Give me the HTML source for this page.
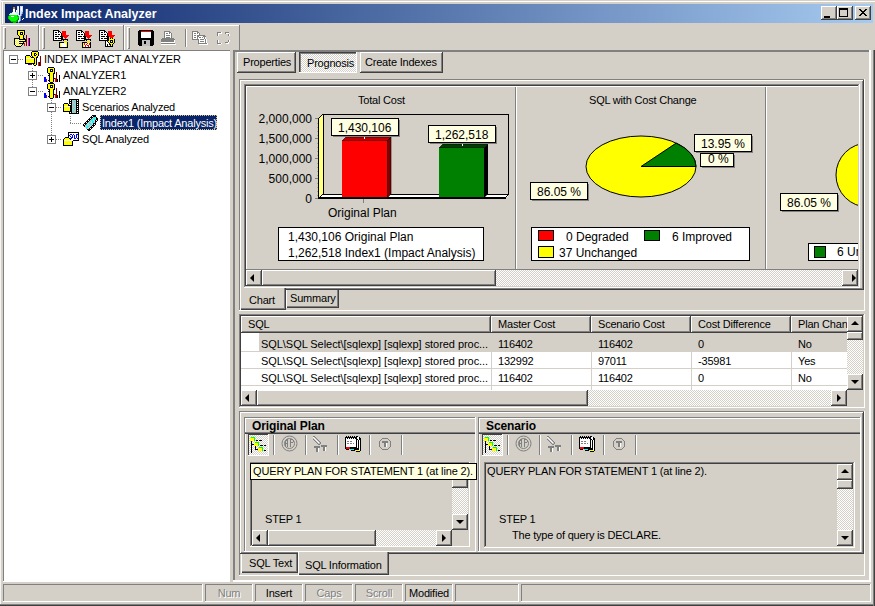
<!DOCTYPE html>
<html><head><meta charset="utf-8">
<style>
*{box-sizing:border-box;margin:0;padding:0}
html,body{width:875px;height:606px;overflow:hidden;background:#d4d0c8;font-family:"Liberation Sans",sans-serif;font-size:11px;color:#000}
.a{position:absolute}
.t{position:absolute;white-space:pre;line-height:13px;letter-spacing:-0.2px}
.up{letter-spacing:0}
.raised{background:#d4d0c8;box-shadow:inset -1px -1px #404040,inset 1px 1px #fff,inset -2px -2px #808080}
.raised2{background:#d4d0c8;box-shadow:inset -1px -1px #404040,inset 1px 1px #fff,inset -2px -2px #808080}
.sunk{box-shadow:inset -1px -1px #fff,inset 1px 1px #808080,inset -2px -2px #d4d0c8,inset 2px 2px #404040}
.dith{background:repeating-conic-gradient(#d4d0c8 0 25%,#fff 0 50%) 0 0/2px 2px}
.hl{background:#fff}
.dk{background:#808080}
.dd{background:#404040}
.arr{position:absolute;width:0;height:0;border:4px solid transparent}
</style></head><body>

<!-- window frame -->
<div class="a hl" style="left:1px;top:1px;width:874px;height:1px"></div>
<div class="a hl" style="left:2px;top:1px;width:1px;height:23px"></div>
<div class="a" style="left:0;top:0;width:1px;height:604px;background:#f4f4f4"></div>
<div class="a dk" style="left:0;top:604px;width:875px;height:1px"></div>
<div class="a dd" style="left:0;top:605px;width:875px;height:1px"></div>
<div class="a dk" style="left:873px;top:50px;width:1px;height:556px"></div>
<div class="a dd" style="left:874px;top:50px;width:1px;height:556px"></div>

<!-- title bar -->
<div class="a" style="left:5px;top:4px;width:868px;height:19px;background:linear-gradient(to right,#0a246a,#a6caf0)"></div>
<svg class="a" style="left:8px;top:6px" width="17" height="17" shape-rendering="crispEdges"><rect x="9" y="0" width="2" height="1" fill="#d0e0ff"/><rect x="12" y="0" width="3" height="1" fill="#d0e0ff"/><rect x="5" y="1" width="2" height="1" fill="#e08020"/><rect x="9" y="1" width="1" height="1" fill="#d0e0ff"/><rect x="10" y="1" width="1" height="1" fill="#fff"/><rect x="12" y="1" width="1" height="1" fill="#d0e0ff"/><rect x="13" y="1" width="1" height="1" fill="#fff"/><rect x="14" y="1" width="1" height="1" fill="#d0e0ff"/><rect x="5" y="2" width="2" height="1" fill="#e08020"/><rect x="9" y="2" width="1" height="1" fill="#d0e0ff"/><rect x="10" y="2" width="1" height="1" fill="#fff"/><rect x="12" y="2" width="1" height="1" fill="#d0e0ff"/><rect x="13" y="2" width="1" height="1" fill="#fff"/><rect x="14" y="2" width="1" height="1" fill="#d0e0ff"/><rect x="5" y="3" width="2" height="1" fill="#fff"/><rect x="9" y="3" width="1" height="1" fill="#d0e0ff"/><rect x="10" y="3" width="1" height="1" fill="#fff"/><rect x="12" y="3" width="1" height="1" fill="#d0e0ff"/><rect x="13" y="3" width="1" height="1" fill="#fff"/><rect x="14" y="3" width="1" height="1" fill="#d0e0ff"/><rect x="5" y="4" width="2" height="1" fill="#fff"/><rect x="8" y="4" width="1" height="1" fill="#fff"/><rect x="9" y="4" width="1" height="1" fill="#d0e0ff"/><rect x="10" y="4" width="1" height="1" fill="#fff"/><rect x="12" y="4" width="1" height="1" fill="#d0e0ff"/><rect x="13" y="4" width="1" height="1" fill="#fff"/><rect x="14" y="4" width="1" height="1" fill="#d0e0ff"/><rect x="5" y="5" width="2" height="1" fill="#fff"/><rect x="8" y="5" width="1" height="1" fill="#fff"/><rect x="9" y="5" width="1" height="1" fill="#d0e0ff"/><rect x="10" y="5" width="1" height="1" fill="#fff"/><rect x="12" y="5" width="3" height="1" fill="#d0e0ff"/><rect x="4" y="6" width="1" height="1" fill="#d0e0ff"/><rect x="5" y="6" width="2" height="1" fill="#fff"/><rect x="7" y="6" width="3" height="1" fill="#d0e0ff"/><rect x="10" y="6" width="1" height="1" fill="#fff"/><rect x="12" y="6" width="2" height="1" fill="#d0e0ff"/><rect x="14" y="6" width="1" height="1" fill="#8090d0"/><rect x="2" y="7" width="2" height="1" fill="#d0e0ff"/><rect x="4" y="7" width="4" height="1" fill="#fff"/><rect x="8" y="7" width="3" height="1" fill="#d0e0ff"/><rect x="12" y="7" width="2" height="1" fill="#d0e0ff"/><rect x="14" y="7" width="1" height="1" fill="#8090d0"/><rect x="1" y="8" width="2" height="1" fill="#d0e0ff"/><rect x="3" y="8" width="6" height="1" fill="#fff"/><rect x="9" y="8" width="2" height="1" fill="#d0e0ff"/><rect x="12" y="8" width="1" height="1" fill="#d0e0ff"/><rect x="13" y="8" width="1" height="1" fill="#8090d0"/><rect x="1" y="9" width="1" height="1" fill="#00c000"/><rect x="2" y="9" width="7" height="1" fill="#0f0"/><rect x="9" y="9" width="1" height="1" fill="#00c000"/><rect x="10" y="9" width="3" height="1" fill="#d0e0ff"/><rect x="13" y="9" width="1" height="1" fill="#8090d0"/><rect x="0" y="10" width="1" height="1" fill="#00c000"/><rect x="1" y="10" width="2" height="1" fill="#0f0"/><rect x="3" y="10" width="3" height="1" fill="#fff"/><rect x="6" y="10" width="3" height="1" fill="#0f0"/><rect x="9" y="10" width="2" height="1" fill="#00c000"/><rect x="11" y="10" width="1" height="1" fill="#d0e0ff"/><rect x="12" y="10" width="1" height="1" fill="#8090d0"/><rect x="0" y="11" width="1" height="1" fill="#00c000"/><rect x="1" y="11" width="9" height="1" fill="#0f0"/><rect x="10" y="11" width="1" height="1" fill="#00c000"/><rect x="11" y="11" width="1" height="1" fill="#d0e0ff"/><rect x="12" y="11" width="1" height="1" fill="#8090d0"/><rect x="0" y="12" width="1" height="1" fill="#00c000"/><rect x="1" y="12" width="9" height="1" fill="#0f0"/><rect x="10" y="12" width="1" height="1" fill="#008000"/><rect x="11" y="12" width="1" height="1" fill="#d0e0ff"/><rect x="12" y="12" width="1" height="1" fill="#8090d0"/><rect x="15" y="12" width="1" height="1" fill="#fff"/><rect x="1" y="13" width="1" height="1" fill="#00c000"/><rect x="2" y="13" width="7" height="1" fill="#0f0"/><rect x="9" y="13" width="1" height="1" fill="#00c000"/><rect x="10" y="13" width="1" height="1" fill="#008000"/><rect x="11" y="13" width="1" height="1" fill="#d0e0ff"/><rect x="12" y="13" width="1" height="1" fill="#8090d0"/><rect x="14" y="13" width="1" height="1" fill="#fff"/><rect x="2" y="14" width="1" height="1" fill="#00c000"/><rect x="3" y="14" width="5" height="1" fill="#0f0"/><rect x="8" y="14" width="1" height="1" fill="#00c000"/><rect x="9" y="14" width="1" height="1" fill="#008000"/><rect x="10" y="14" width="2" height="1" fill="#d0e0ff"/><rect x="12" y="14" width="1" height="1" fill="#8090d0"/><rect x="3" y="15" width="6" height="1" fill="#00c000"/><rect x="9" y="15" width="1" height="1" fill="#008000"/><rect x="10" y="15" width="1" height="1" fill="#d0e0ff"/><rect x="11" y="15" width="1" height="1" fill="#8090d0"/><rect x="5" y="16" width="3" height="1" fill="#00c000"/><rect x="10" y="16" width="1" height="1" fill="#8090d0"/></svg>
<div class="t" style="left:25px;top:7px;color:#fff;font-weight:bold;font-size:12.5px;line-height:15px;letter-spacing:0">Index Impact Analyzer</div>
<div class="a raised" style="left:821px;top:6px;width:16px;height:14px"></div>
<div class="a" style="left:824px;top:16px;width:6px;height:2px;background:#000"></div>
<div class="a raised" style="left:837px;top:6px;width:16px;height:14px"></div>
<div class="a" style="left:839px;top:8px;width:9px;height:9px;border:1px solid #000;border-top-width:2px"></div>
<div class="a raised" style="left:855px;top:6px;width:16px;height:14px"></div>
<svg class="a" style="left:855px;top:6px" width="16" height="14" shape-rendering="crispEdges">
<path d="M4 3h2v1h-2zM10 3h2v1h-2zM5 4h2v1h-2zM9 4h2v1h-2zM6 5h4v1h-4zM7 6h2v1h-2zM6 7h4v1h-4zM5 8h2v1h-2zM9 8h2v1h-2zM4 9h2v1h-2zM10 9h2v1h-2z" fill="#000"/>
</svg>
<!-- toolbar -->
<div class="a hl" style="left:1px;top:25px;width:239px;height:1px"></div>
<div class="a" style="left:3px;top:27px;width:3px;height:22px;box-shadow:inset 1px 1px #fff,inset -1px -1px #808080"></div>
<div class="a" style="left:42px;top:27px;width:3px;height:22px;box-shadow:inset 1px 1px #fff,inset -1px -1px #808080"></div>
<div class="a" style="left:127px;top:27px;width:3px;height:22px;box-shadow:inset 1px 1px #fff,inset -1px -1px #808080"></div>
<div class="a dk" style="left:38px;top:25px;width:1px;height:25px"></div><div class="a hl" style="left:39px;top:25px;width:1px;height:25px"></div>
<div class="a dk" style="left:123px;top:25px;width:1px;height:25px"></div><div class="a hl" style="left:124px;top:25px;width:1px;height:25px"></div>
<div class="a dk" style="left:239px;top:25px;width:1px;height:25px"></div>
<div class="a dk" style="left:185px;top:29px;width:1px;height:18px"></div>
<div class="a hl" style="left:186px;top:29px;width:1px;height:18px"></div>
<!--ICONS-->
<svg class="a" style="left:13px;top:29px" width="18" height="18" shape-rendering="crispEdges"><rect x="4" y="1" width="8" height="1" fill="#000"/><rect x="4" y="2" width="1" height="1" fill="#000"/><rect x="5" y="2" width="6" height="1" fill="#ff0"/><rect x="11" y="2" width="1" height="1" fill="#000"/><rect x="4" y="3" width="1" height="1" fill="#000"/><rect x="5" y="3" width="2" height="1" fill="#ff0"/><rect x="7" y="3" width="3" height="1" fill="#000"/><rect x="10" y="3" width="1" height="1" fill="#ff0"/><rect x="11" y="3" width="1" height="1" fill="#000"/><rect x="4" y="4" width="1" height="1" fill="#000"/><rect x="5" y="4" width="2" height="1" fill="#ff0"/><rect x="7" y="4" width="1" height="1" fill="#000"/><rect x="8" y="4" width="1" height="1" fill="#fff"/><rect x="9" y="4" width="1" height="1" fill="#000"/><rect x="10" y="4" width="1" height="1" fill="#ff0"/><rect x="11" y="4" width="1" height="1" fill="#000"/><rect x="4" y="5" width="1" height="1" fill="#000"/><rect x="5" y="5" width="2" height="1" fill="#ff0"/><rect x="7" y="5" width="3" height="1" fill="#000"/><rect x="10" y="5" width="1" height="1" fill="#ff0"/><rect x="11" y="5" width="1" height="1" fill="#000"/><rect x="5" y="6" width="1" height="1" fill="#000"/><rect x="6" y="6" width="4" height="1" fill="#ff0"/><rect x="10" y="6" width="1" height="1" fill="#000"/><rect x="13" y="6" width="1" height="1" fill="#800000"/><rect x="6" y="7" width="1" height="1" fill="#000"/><rect x="7" y="7" width="3" height="1" fill="#ff0"/><rect x="10" y="7" width="1" height="1" fill="#000"/><rect x="13" y="7" width="1" height="1" fill="#800000"/><rect x="6" y="8" width="1" height="1" fill="#000"/><rect x="7" y="8" width="3" height="1" fill="#ff0"/><rect x="10" y="8" width="1" height="1" fill="#000"/><rect x="13" y="8" width="1" height="1" fill="#800000"/><rect x="1" y="9" width="6" height="1" fill="#000"/><rect x="7" y="9" width="3" height="1" fill="#ff0"/><rect x="10" y="9" width="2" height="1" fill="#000"/><rect x="13" y="9" width="1" height="1" fill="#800000"/><rect x="15" y="9" width="1" height="1" fill="#f0f"/><rect x="16" y="9" width="1" height="1" fill="#000"/><rect x="1" y="10" width="1" height="1" fill="#000"/><rect x="2" y="10" width="1" height="1" fill="#ff0"/><rect x="3" y="10" width="1" height="1" fill="#fff"/><rect x="4" y="10" width="1" height="1" fill="#ff0"/><rect x="5" y="10" width="1" height="1" fill="#fff"/><rect x="6" y="10" width="7" height="1" fill="#000"/><rect x="13" y="10" width="1" height="1" fill="#800000"/><rect x="15" y="10" width="1" height="1" fill="#f0f"/><rect x="16" y="10" width="1" height="1" fill="#000"/><rect x="1" y="11" width="1" height="1" fill="#000"/><rect x="2" y="11" width="1" height="1" fill="#fff"/><rect x="3" y="11" width="1" height="1" fill="#ff0"/><rect x="4" y="11" width="1" height="1" fill="#fff"/><rect x="5" y="11" width="1" height="1" fill="#ff0"/><rect x="6" y="11" width="1" height="1" fill="#fff"/><rect x="7" y="11" width="1" height="1" fill="#ff0"/><rect x="8" y="11" width="1" height="1" fill="#fff"/><rect x="9" y="11" width="1" height="1" fill="#ff0"/><rect x="10" y="11" width="1" height="1" fill="#fff"/><rect x="11" y="11" width="1" height="1" fill="#ff0"/><rect x="12" y="11" width="1" height="1" fill="#000"/><rect x="13" y="11" width="1" height="1" fill="#800000"/><rect x="15" y="11" width="1" height="1" fill="#f0f"/><rect x="16" y="11" width="1" height="1" fill="#000"/><rect x="1" y="12" width="1" height="1" fill="#000"/><rect x="2" y="12" width="1" height="1" fill="#ff0"/><rect x="3" y="12" width="1" height="1" fill="#fff"/><rect x="4" y="12" width="1" height="1" fill="#ff0"/><rect x="5" y="12" width="1" height="1" fill="#fff"/><rect x="6" y="12" width="7" height="1" fill="#000"/><rect x="13" y="12" width="1" height="1" fill="#800000"/><rect x="15" y="12" width="1" height="1" fill="#f0f"/><rect x="16" y="12" width="1" height="1" fill="#000"/><rect x="1" y="13" width="1" height="1" fill="#000"/><rect x="2" y="13" width="1" height="1" fill="#fff"/><rect x="3" y="13" width="1" height="1" fill="#ff0"/><rect x="4" y="13" width="1" height="1" fill="#fff"/><rect x="5" y="13" width="1" height="1" fill="#ff0"/><rect x="6" y="13" width="1" height="1" fill="#fff"/><rect x="7" y="13" width="1" height="1" fill="#ff0"/><rect x="8" y="13" width="1" height="1" fill="#fff"/><rect x="9" y="13" width="1" height="1" fill="#ff0"/><rect x="10" y="13" width="1" height="1" fill="#000"/><rect x="13" y="13" width="1" height="1" fill="#800000"/><rect x="15" y="13" width="1" height="1" fill="#f0f"/><rect x="16" y="13" width="1" height="1" fill="#000"/><rect x="1" y="14" width="1" height="1" fill="#000"/><rect x="2" y="14" width="1" height="1" fill="#ff0"/><rect x="3" y="14" width="1" height="1" fill="#fff"/><rect x="4" y="14" width="1" height="1" fill="#ff0"/><rect x="5" y="14" width="1" height="1" fill="#fff"/><rect x="6" y="14" width="5" height="1" fill="#000"/><rect x="11" y="14" width="1" height="1" fill="#f00"/><rect x="13" y="14" width="1" height="1" fill="#800000"/><rect x="15" y="14" width="1" height="1" fill="#f0f"/><rect x="16" y="14" width="1" height="1" fill="#000"/><rect x="1" y="15" width="1" height="1" fill="#000"/><rect x="2" y="15" width="1" height="1" fill="#fff"/><rect x="3" y="15" width="1" height="1" fill="#ff0"/><rect x="4" y="15" width="1" height="1" fill="#fff"/><rect x="5" y="15" width="1" height="1" fill="#ff0"/><rect x="6" y="15" width="1" height="1" fill="#fff"/><rect x="7" y="15" width="1" height="1" fill="#ff0"/><rect x="8" y="15" width="1" height="1" fill="#fff"/><rect x="9" y="15" width="1" height="1" fill="#000"/><rect x="11" y="15" width="1" height="1" fill="#f00"/><rect x="13" y="15" width="1" height="1" fill="#800000"/><rect x="15" y="15" width="1" height="1" fill="#f0f"/><rect x="16" y="15" width="1" height="1" fill="#000"/><rect x="2" y="16" width="1" height="1" fill="#000"/><rect x="3" y="16" width="1" height="1" fill="#fff"/><rect x="4" y="16" width="1" height="1" fill="#ff0"/><rect x="5" y="16" width="1" height="1" fill="#fff"/><rect x="6" y="16" width="1" height="1" fill="#ff0"/><rect x="7" y="16" width="1" height="1" fill="#fff"/><rect x="8" y="16" width="1" height="1" fill="#000"/><rect x="11" y="16" width="1" height="1" fill="#f00"/><rect x="13" y="16" width="1" height="1" fill="#800000"/><rect x="15" y="16" width="1" height="1" fill="#f0f"/><rect x="16" y="16" width="1" height="1" fill="#000"/><rect x="3" y="17" width="5" height="1" fill="#000"/></svg>
<svg class="a" style="left:53px;top:30px" width="17" height="18" shape-rendering="crispEdges"><rect x="0" y="0" width="6" height="1" fill="#000"/><rect x="0" y="1" width="1" height="1" fill="#000"/><rect x="1" y="1" width="4" height="1" fill="#fff"/><rect x="5" y="1" width="2" height="1" fill="#000"/><rect x="9" y="1" width="4" height="1" fill="#f00"/><rect x="0" y="2" width="1" height="1" fill="#000"/><rect x="1" y="2" width="1" height="1" fill="#fff"/><rect x="2" y="2" width="2" height="1" fill="#000"/><rect x="4" y="2" width="1" height="1" fill="#fff"/><rect x="5" y="2" width="1" height="1" fill="#000"/><rect x="6" y="2" width="1" height="1" fill="#fff"/><rect x="7" y="2" width="1" height="1" fill="#000"/><rect x="9" y="2" width="4" height="1" fill="#f00"/><rect x="0" y="3" width="1" height="1" fill="#000"/><rect x="1" y="3" width="7" height="1" fill="#fff"/><rect x="8" y="3" width="1" height="1" fill="#000"/><rect x="9" y="3" width="4" height="1" fill="#f00"/><rect x="0" y="4" width="1" height="1" fill="#000"/><rect x="1" y="4" width="1" height="1" fill="#fff"/><rect x="2" y="4" width="2" height="1" fill="#000"/><rect x="4" y="4" width="1" height="1" fill="#fff"/><rect x="5" y="4" width="2" height="1" fill="#000"/><rect x="7" y="4" width="1" height="1" fill="#fff"/><rect x="8" y="4" width="1" height="1" fill="#000"/><rect x="9" y="4" width="4" height="1" fill="#f00"/><rect x="0" y="5" width="1" height="1" fill="#000"/><rect x="1" y="5" width="7" height="1" fill="#fff"/><rect x="8" y="5" width="1" height="1" fill="#000"/><rect x="9" y="5" width="7" height="1" fill="#f00"/><rect x="0" y="6" width="1" height="1" fill="#000"/><rect x="1" y="6" width="1" height="1" fill="#fff"/><rect x="2" y="6" width="4" height="1" fill="#000"/><rect x="6" y="6" width="1" height="1" fill="#fff"/><rect x="7" y="6" width="3" height="1" fill="#000"/><rect x="10" y="6" width="5" height="1" fill="#f00"/><rect x="0" y="7" width="1" height="1" fill="#000"/><rect x="1" y="7" width="7" height="1" fill="#fff"/><rect x="8" y="7" width="2" height="1" fill="#000"/><rect x="11" y="7" width="3" height="1" fill="#f00"/><rect x="0" y="8" width="1" height="1" fill="#000"/><rect x="1" y="8" width="1" height="1" fill="#fff"/><rect x="2" y="8" width="2" height="1" fill="#000"/><rect x="4" y="8" width="1" height="1" fill="#fff"/><rect x="5" y="8" width="5" height="1" fill="#000"/><rect x="12" y="8" width="1" height="1" fill="#f00"/><rect x="0" y="9" width="1" height="1" fill="#000"/><rect x="1" y="9" width="7" height="1" fill="#fff"/><rect x="8" y="9" width="7" height="1" fill="#000"/><rect x="0" y="10" width="9" height="1" fill="#000"/><rect x="10" y="10" width="1" height="1" fill="#000"/><rect x="11" y="10" width="3" height="1" fill="#ff0"/><rect x="14" y="10" width="1" height="1" fill="#000"/><rect x="6" y="12" width="5" height="1" fill="#000"/><rect x="11" y="12" width="3" height="1" fill="#ff0"/><rect x="14" y="12" width="1" height="1" fill="#000"/><rect x="6" y="13" width="1" height="1" fill="#000"/><rect x="7" y="13" width="1" height="1" fill="#ff0"/><rect x="8" y="13" width="5" height="1" fill="#fff"/><rect x="13" y="13" width="1" height="1" fill="#ff0"/><rect x="14" y="13" width="1" height="1" fill="#000"/><rect x="6" y="14" width="1" height="1" fill="#000"/><rect x="7" y="14" width="1" height="1" fill="#ff0"/><rect x="8" y="14" width="5" height="1" fill="#fff"/><rect x="13" y="14" width="1" height="1" fill="#ff0"/><rect x="14" y="14" width="1" height="1" fill="#000"/><rect x="6" y="15" width="1" height="1" fill="#000"/><rect x="7" y="15" width="1" height="1" fill="#ff0"/><rect x="8" y="15" width="5" height="1" fill="#fff"/><rect x="13" y="15" width="1" height="1" fill="#ff0"/><rect x="14" y="15" width="1" height="1" fill="#000"/><rect x="6" y="16" width="1" height="1" fill="#000"/><rect x="7" y="16" width="1" height="1" fill="#ff0"/><rect x="8" y="16" width="5" height="1" fill="#fff"/><rect x="13" y="16" width="1" height="1" fill="#ff0"/><rect x="14" y="16" width="1" height="1" fill="#000"/><rect x="6" y="17" width="9" height="1" fill="#000"/></svg>
<svg class="a" style="left:76px;top:30px" width="17" height="18" shape-rendering="crispEdges"><rect x="0" y="0" width="6" height="1" fill="#000"/><rect x="0" y="1" width="1" height="1" fill="#000"/><rect x="1" y="1" width="4" height="1" fill="#fff"/><rect x="5" y="1" width="2" height="1" fill="#000"/><rect x="9" y="1" width="4" height="1" fill="#f00"/><rect x="0" y="2" width="1" height="1" fill="#000"/><rect x="1" y="2" width="1" height="1" fill="#fff"/><rect x="2" y="2" width="2" height="1" fill="#000"/><rect x="4" y="2" width="1" height="1" fill="#fff"/><rect x="5" y="2" width="1" height="1" fill="#000"/><rect x="6" y="2" width="1" height="1" fill="#fff"/><rect x="7" y="2" width="1" height="1" fill="#000"/><rect x="9" y="2" width="4" height="1" fill="#f00"/><rect x="0" y="3" width="1" height="1" fill="#000"/><rect x="1" y="3" width="7" height="1" fill="#fff"/><rect x="8" y="3" width="1" height="1" fill="#000"/><rect x="9" y="3" width="4" height="1" fill="#f00"/><rect x="0" y="4" width="1" height="1" fill="#000"/><rect x="1" y="4" width="1" height="1" fill="#fff"/><rect x="2" y="4" width="2" height="1" fill="#000"/><rect x="4" y="4" width="1" height="1" fill="#fff"/><rect x="5" y="4" width="2" height="1" fill="#000"/><rect x="7" y="4" width="1" height="1" fill="#fff"/><rect x="8" y="4" width="1" height="1" fill="#000"/><rect x="9" y="4" width="4" height="1" fill="#f00"/><rect x="0" y="5" width="1" height="1" fill="#000"/><rect x="1" y="5" width="7" height="1" fill="#fff"/><rect x="8" y="5" width="1" height="1" fill="#000"/><rect x="9" y="5" width="7" height="1" fill="#f00"/><rect x="0" y="6" width="1" height="1" fill="#000"/><rect x="1" y="6" width="1" height="1" fill="#fff"/><rect x="2" y="6" width="4" height="1" fill="#000"/><rect x="6" y="6" width="1" height="1" fill="#fff"/><rect x="7" y="6" width="3" height="1" fill="#000"/><rect x="10" y="6" width="5" height="1" fill="#f00"/><rect x="0" y="7" width="1" height="1" fill="#000"/><rect x="1" y="7" width="7" height="1" fill="#fff"/><rect x="8" y="7" width="2" height="1" fill="#000"/><rect x="11" y="7" width="3" height="1" fill="#f00"/><rect x="0" y="8" width="1" height="1" fill="#000"/><rect x="1" y="8" width="1" height="1" fill="#fff"/><rect x="2" y="8" width="2" height="1" fill="#000"/><rect x="4" y="8" width="1" height="1" fill="#fff"/><rect x="5" y="8" width="5" height="1" fill="#000"/><rect x="12" y="8" width="1" height="1" fill="#f00"/><rect x="0" y="9" width="1" height="1" fill="#000"/><rect x="1" y="9" width="7" height="1" fill="#fff"/><rect x="8" y="9" width="7" height="1" fill="#000"/><rect x="0" y="10" width="9" height="1" fill="#000"/><rect x="10" y="10" width="1" height="1" fill="#000"/><rect x="11" y="10" width="3" height="1" fill="#ff0"/><rect x="14" y="10" width="1" height="1" fill="#000"/><rect x="6" y="12" width="5" height="1" fill="#000"/><rect x="11" y="12" width="3" height="1" fill="#ff0"/><rect x="14" y="12" width="1" height="1" fill="#000"/><rect x="6" y="13" width="1" height="1" fill="#000"/><rect x="7" y="13" width="1" height="1" fill="#ff0"/><rect x="8" y="13" width="1" height="1" fill="#f00"/><rect x="9" y="13" width="2" height="1" fill="#fff"/><rect x="11" y="13" width="1" height="1" fill="#f00"/><rect x="12" y="13" width="1" height="1" fill="#fff"/><rect x="13" y="13" width="1" height="1" fill="#f00"/><rect x="14" y="13" width="1" height="1" fill="#000"/><rect x="6" y="14" width="1" height="1" fill="#000"/><rect x="7" y="14" width="1" height="1" fill="#ff0"/><rect x="8" y="14" width="1" height="1" fill="#f00"/><rect x="9" y="14" width="1" height="1" fill="#fff"/><rect x="10" y="14" width="1" height="1" fill="#f00"/><rect x="11" y="14" width="2" height="1" fill="#fff"/><rect x="13" y="14" width="1" height="1" fill="#f00"/><rect x="14" y="14" width="1" height="1" fill="#000"/><rect x="6" y="15" width="1" height="1" fill="#000"/><rect x="7" y="15" width="1" height="1" fill="#ff0"/><rect x="8" y="15" width="1" height="1" fill="#fff"/><rect x="9" y="15" width="1" height="1" fill="#f00"/><rect x="10" y="15" width="1" height="1" fill="#fff"/><rect x="11" y="15" width="2" height="1" fill="#f00"/><rect x="13" y="15" width="1" height="1" fill="#fff"/><rect x="14" y="15" width="1" height="1" fill="#000"/><rect x="6" y="16" width="1" height="1" fill="#000"/><rect x="7" y="16" width="1" height="1" fill="#ff0"/><rect x="8" y="16" width="1" height="1" fill="#fff"/><rect x="9" y="16" width="1" height="1" fill="#f00"/><rect x="10" y="16" width="2" height="1" fill="#fff"/><rect x="12" y="16" width="1" height="1" fill="#f00"/><rect x="13" y="16" width="1" height="1" fill="#fff"/><rect x="14" y="16" width="1" height="1" fill="#000"/><rect x="6" y="17" width="9" height="1" fill="#000"/></svg>
<svg class="a" style="left:99px;top:30px" width="17" height="17" shape-rendering="crispEdges"><rect x="0" y="0" width="6" height="1" fill="#000"/><rect x="0" y="1" width="1" height="1" fill="#000"/><rect x="1" y="1" width="4" height="1" fill="#fff"/><rect x="5" y="1" width="2" height="1" fill="#000"/><rect x="9" y="1" width="4" height="1" fill="#f00"/><rect x="0" y="2" width="1" height="1" fill="#000"/><rect x="1" y="2" width="1" height="1" fill="#fff"/><rect x="2" y="2" width="2" height="1" fill="#000"/><rect x="4" y="2" width="1" height="1" fill="#fff"/><rect x="5" y="2" width="1" height="1" fill="#000"/><rect x="6" y="2" width="1" height="1" fill="#fff"/><rect x="7" y="2" width="1" height="1" fill="#000"/><rect x="9" y="2" width="4" height="1" fill="#f00"/><rect x="0" y="3" width="1" height="1" fill="#000"/><rect x="1" y="3" width="7" height="1" fill="#fff"/><rect x="8" y="3" width="1" height="1" fill="#000"/><rect x="9" y="3" width="4" height="1" fill="#f00"/><rect x="0" y="4" width="1" height="1" fill="#000"/><rect x="1" y="4" width="1" height="1" fill="#fff"/><rect x="2" y="4" width="2" height="1" fill="#000"/><rect x="4" y="4" width="1" height="1" fill="#fff"/><rect x="5" y="4" width="2" height="1" fill="#000"/><rect x="7" y="4" width="1" height="1" fill="#fff"/><rect x="8" y="4" width="1" height="1" fill="#000"/><rect x="9" y="4" width="4" height="1" fill="#f00"/><rect x="0" y="5" width="1" height="1" fill="#000"/><rect x="1" y="5" width="7" height="1" fill="#fff"/><rect x="8" y="5" width="1" height="1" fill="#000"/><rect x="9" y="5" width="7" height="1" fill="#f00"/><rect x="0" y="6" width="1" height="1" fill="#000"/><rect x="1" y="6" width="1" height="1" fill="#fff"/><rect x="2" y="6" width="4" height="1" fill="#000"/><rect x="6" y="6" width="1" height="1" fill="#fff"/><rect x="7" y="6" width="3" height="1" fill="#000"/><rect x="10" y="6" width="5" height="1" fill="#f00"/><rect x="0" y="7" width="1" height="1" fill="#000"/><rect x="1" y="7" width="7" height="1" fill="#fff"/><rect x="8" y="7" width="2" height="1" fill="#000"/><rect x="11" y="7" width="3" height="1" fill="#f00"/><rect x="0" y="8" width="1" height="1" fill="#000"/><rect x="1" y="8" width="1" height="1" fill="#fff"/><rect x="2" y="8" width="2" height="1" fill="#000"/><rect x="4" y="8" width="1" height="1" fill="#fff"/><rect x="5" y="8" width="5" height="1" fill="#000"/><rect x="11" y="8" width="1" height="1" fill="#000"/><rect x="12" y="8" width="1" height="1" fill="#ff0"/><rect x="13" y="8" width="1" height="1" fill="#000"/><rect x="0" y="9" width="1" height="1" fill="#000"/><rect x="1" y="9" width="7" height="1" fill="#fff"/><rect x="8" y="9" width="2" height="1" fill="#000"/><rect x="10" y="9" width="5" height="1" fill="#ff0"/><rect x="15" y="9" width="1" height="1" fill="#000"/><rect x="0" y="10" width="10" height="1" fill="#000"/><rect x="10" y="10" width="1" height="1" fill="#ff0"/><rect x="11" y="10" width="3" height="1" fill="#000"/><rect x="14" y="10" width="1" height="1" fill="#ff0"/><rect x="15" y="10" width="1" height="1" fill="#000"/><rect x="6" y="11" width="1" height="1" fill="#000"/><rect x="7" y="11" width="1" height="1" fill="#fff"/><rect x="8" y="11" width="1" height="1" fill="#000"/><rect x="9" y="11" width="2" height="1" fill="#ff0"/><rect x="11" y="11" width="1" height="1" fill="#000"/><rect x="12" y="11" width="1" height="1" fill="#fff"/><rect x="13" y="11" width="1" height="1" fill="#000"/><rect x="14" y="11" width="1" height="1" fill="#ff0"/><rect x="15" y="11" width="1" height="1" fill="#000"/><rect x="6" y="12" width="1" height="1" fill="#000"/><rect x="7" y="12" width="2" height="1" fill="#fff"/><rect x="9" y="12" width="1" height="1" fill="#000"/><rect x="10" y="12" width="1" height="1" fill="#ff0"/><rect x="11" y="12" width="3" height="1" fill="#000"/><rect x="14" y="12" width="1" height="1" fill="#ff0"/><rect x="15" y="12" width="1" height="1" fill="#000"/><rect x="6" y="13" width="1" height="1" fill="#000"/><rect x="7" y="13" width="3" height="1" fill="#fff"/><rect x="10" y="13" width="1" height="1" fill="#000"/><rect x="11" y="13" width="3" height="1" fill="#ff0"/><rect x="14" y="13" width="1" height="1" fill="#000"/><rect x="6" y="14" width="1" height="1" fill="#000"/><rect x="7" y="14" width="1" height="1" fill="#fff"/><rect x="8" y="14" width="1" height="1" fill="#000"/><rect x="9" y="14" width="1" height="1" fill="#fff"/><rect x="10" y="14" width="2" height="1" fill="#000"/><rect x="12" y="14" width="1" height="1" fill="#ff0"/><rect x="13" y="14" width="1" height="1" fill="#000"/><rect x="6" y="15" width="1" height="1" fill="#000"/><rect x="7" y="15" width="1" height="1" fill="#fff"/><rect x="8" y="15" width="1" height="1" fill="#000"/><rect x="9" y="15" width="2" height="1" fill="#fff"/><rect x="11" y="15" width="1" height="1" fill="#000"/><rect x="12" y="15" width="1" height="1" fill="#ff0"/><rect x="13" y="15" width="1" height="1" fill="#000"/><rect x="6" y="16" width="8" height="1" fill="#000"/></svg>
<svg class="a" style="left:138px;top:30px" width="16" height="16" shape-rendering="crispEdges"><rect x="1" y="0" width="14" height="1" fill="#000"/><rect x="0" y="1" width="3" height="1" fill="#000"/><rect x="3" y="1" width="10" height="1" fill="#f00"/><rect x="13" y="1" width="3" height="1" fill="#000"/><rect x="0" y="2" width="3" height="1" fill="#000"/><rect x="3" y="2" width="10" height="1" fill="#fff"/><rect x="13" y="2" width="3" height="1" fill="#000"/><rect x="0" y="3" width="3" height="1" fill="#000"/><rect x="3" y="3" width="10" height="1" fill="#fff"/><rect x="13" y="3" width="3" height="1" fill="#000"/><rect x="0" y="4" width="3" height="1" fill="#000"/><rect x="3" y="4" width="10" height="1" fill="#fff"/><rect x="13" y="4" width="3" height="1" fill="#000"/><rect x="0" y="5" width="3" height="1" fill="#000"/><rect x="3" y="5" width="10" height="1" fill="#fff"/><rect x="13" y="5" width="3" height="1" fill="#000"/><rect x="0" y="6" width="3" height="1" fill="#000"/><rect x="3" y="6" width="10" height="1" fill="#fff"/><rect x="13" y="6" width="3" height="1" fill="#000"/><rect x="0" y="7" width="3" height="1" fill="#000"/><rect x="3" y="7" width="10" height="1" fill="#fff"/><rect x="13" y="7" width="3" height="1" fill="#000"/><rect x="0" y="8" width="16" height="1" fill="#000"/><rect x="0" y="9" width="16" height="1" fill="#000"/><rect x="0" y="10" width="4" height="1" fill="#000"/><rect x="4" y="10" width="8" height="1" fill="#c0c0c0"/><rect x="12" y="10" width="4" height="1" fill="#000"/><rect x="0" y="11" width="4" height="1" fill="#000"/><rect x="4" y="11" width="2" height="1" fill="#c0c0c0"/><rect x="6" y="11" width="2" height="1" fill="#000"/><rect x="8" y="11" width="4" height="1" fill="#c0c0c0"/><rect x="12" y="11" width="4" height="1" fill="#000"/><rect x="0" y="12" width="4" height="1" fill="#000"/><rect x="4" y="12" width="2" height="1" fill="#c0c0c0"/><rect x="6" y="12" width="2" height="1" fill="#000"/><rect x="8" y="12" width="4" height="1" fill="#c0c0c0"/><rect x="12" y="12" width="4" height="1" fill="#000"/><rect x="0" y="13" width="4" height="1" fill="#000"/><rect x="4" y="13" width="2" height="1" fill="#c0c0c0"/><rect x="6" y="13" width="2" height="1" fill="#000"/><rect x="8" y="13" width="4" height="1" fill="#c0c0c0"/><rect x="12" y="13" width="4" height="1" fill="#000"/><rect x="0" y="14" width="4" height="1" fill="#000"/><rect x="4" y="14" width="8" height="1" fill="#c0c0c0"/><rect x="12" y="14" width="4" height="1" fill="#000"/><rect x="1" y="15" width="3" height="1" fill="#000"/><rect x="4" y="15" width="8" height="1" fill="#c0c0c0"/><rect x="12" y="15" width="3" height="1" fill="#000"/></svg>
<svg class="a" style="left:159px;top:31px" width="17" height="14" shape-rendering="crispEdges"><rect x="5" y="0" width="6" height="1" fill="#808080"/><rect x="5" y="1" width="1" height="1" fill="#808080"/><rect x="6" y="1" width="4" height="1" fill="#fff"/><rect x="10" y="1" width="2" height="1" fill="#808080"/><rect x="5" y="2" width="1" height="1" fill="#808080"/><rect x="6" y="2" width="1" height="1" fill="#fff"/><rect x="7" y="2" width="2" height="1" fill="#808080"/><rect x="9" y="2" width="1" height="1" fill="#fff"/><rect x="10" y="2" width="1" height="1" fill="#808080"/><rect x="11" y="2" width="1" height="1" fill="#fff"/><rect x="12" y="2" width="1" height="1" fill="#808080"/><rect x="5" y="3" width="1" height="1" fill="#808080"/><rect x="6" y="3" width="6" height="1" fill="#fff"/><rect x="12" y="3" width="1" height="1" fill="#808080"/><rect x="5" y="4" width="1" height="1" fill="#808080"/><rect x="6" y="4" width="1" height="1" fill="#fff"/><rect x="7" y="4" width="4" height="1" fill="#808080"/><rect x="11" y="4" width="1" height="1" fill="#fff"/><rect x="12" y="4" width="1" height="1" fill="#808080"/><rect x="5" y="5" width="1" height="1" fill="#808080"/><rect x="6" y="5" width="6" height="1" fill="#fff"/><rect x="12" y="5" width="1" height="1" fill="#808080"/><rect x="5" y="6" width="1" height="1" fill="#808080"/><rect x="6" y="6" width="1" height="1" fill="#fff"/><rect x="7" y="6" width="4" height="1" fill="#808080"/><rect x="11" y="6" width="1" height="1" fill="#fff"/><rect x="12" y="6" width="1" height="1" fill="#808080"/><rect x="3" y="7" width="12" height="1" fill="#808080"/><rect x="2" y="8" width="14" height="1" fill="#808080"/><rect x="2" y="9" width="13" height="1" fill="#808080"/><rect x="15" y="9" width="1" height="1" fill="#fff"/><rect x="2" y="10" width="13" height="1" fill="#808080"/><rect x="15" y="10" width="1" height="1" fill="#fff"/><rect x="2" y="11" width="14" height="1" fill="#fff"/><rect x="2" y="12" width="14" height="1" fill="#808080"/><rect x="2" y="13" width="15" height="1" fill="#fff"/></svg>
<svg class="a" style="left:192px;top:31px" width="17" height="14" shape-rendering="crispEdges"><rect x="0" y="0" width="6" height="1" fill="#808080"/><rect x="0" y="1" width="1" height="1" fill="#808080"/><rect x="1" y="1" width="4" height="1" fill="#fff"/><rect x="5" y="1" width="2" height="1" fill="#808080"/><rect x="0" y="2" width="1" height="1" fill="#808080"/><rect x="1" y="2" width="1" height="1" fill="#fff"/><rect x="2" y="2" width="2" height="1" fill="#808080"/><rect x="4" y="2" width="1" height="1" fill="#fff"/><rect x="5" y="2" width="1" height="1" fill="#808080"/><rect x="6" y="2" width="1" height="1" fill="#fff"/><rect x="7" y="2" width="1" height="1" fill="#808080"/><rect x="0" y="3" width="1" height="1" fill="#808080"/><rect x="1" y="3" width="6" height="1" fill="#fff"/><rect x="7" y="3" width="1" height="1" fill="#808080"/><rect x="0" y="4" width="1" height="1" fill="#808080"/><rect x="1" y="4" width="1" height="1" fill="#fff"/><rect x="2" y="4" width="2" height="1" fill="#808080"/><rect x="4" y="4" width="1" height="1" fill="#fff"/><rect x="5" y="4" width="8" height="1" fill="#808080"/><rect x="0" y="5" width="1" height="1" fill="#808080"/><rect x="1" y="5" width="4" height="1" fill="#fff"/><rect x="5" y="5" width="2" height="1" fill="#808080"/><rect x="7" y="5" width="4" height="1" fill="#fff"/><rect x="11" y="5" width="3" height="1" fill="#808080"/><rect x="0" y="6" width="1" height="1" fill="#808080"/><rect x="1" y="6" width="1" height="1" fill="#fff"/><rect x="2" y="6" width="2" height="1" fill="#808080"/><rect x="4" y="6" width="1" height="1" fill="#fff"/><rect x="5" y="6" width="1" height="1" fill="#808080"/><rect x="6" y="6" width="1" height="1" fill="#fff"/><rect x="7" y="6" width="2" height="1" fill="#808080"/><rect x="9" y="6" width="1" height="1" fill="#fff"/><rect x="10" y="6" width="1" height="1" fill="#808080"/><rect x="11" y="6" width="1" height="1" fill="#fff"/><rect x="12" y="6" width="1" height="1" fill="#808080"/><rect x="13" y="6" width="1" height="1" fill="#fff"/><rect x="0" y="7" width="1" height="1" fill="#808080"/><rect x="1" y="7" width="4" height="1" fill="#fff"/><rect x="5" y="7" width="1" height="1" fill="#808080"/><rect x="6" y="7" width="6" height="1" fill="#fff"/><rect x="12" y="7" width="1" height="1" fill="#808080"/><rect x="13" y="7" width="1" height="1" fill="#fff"/><rect x="0" y="8" width="7" height="1" fill="#808080"/><rect x="7" y="8" width="1" height="1" fill="#fff"/><rect x="8" y="8" width="4" height="1" fill="#808080"/><rect x="12" y="8" width="1" height="1" fill="#fff"/><rect x="13" y="8" width="1" height="1" fill="#808080"/><rect x="14" y="8" width="1" height="1" fill="#fff"/><rect x="6" y="9" width="1" height="1" fill="#808080"/><rect x="7" y="9" width="6" height="1" fill="#fff"/><rect x="13" y="9" width="1" height="1" fill="#808080"/><rect x="14" y="9" width="1" height="1" fill="#fff"/><rect x="6" y="10" width="1" height="1" fill="#808080"/><rect x="7" y="10" width="1" height="1" fill="#fff"/><rect x="8" y="10" width="4" height="1" fill="#808080"/><rect x="12" y="10" width="1" height="1" fill="#fff"/><rect x="13" y="10" width="1" height="1" fill="#808080"/><rect x="14" y="10" width="1" height="1" fill="#fff"/><rect x="6" y="11" width="1" height="1" fill="#808080"/><rect x="7" y="11" width="6" height="1" fill="#fff"/><rect x="13" y="11" width="1" height="1" fill="#808080"/><rect x="14" y="11" width="1" height="1" fill="#fff"/><rect x="6" y="12" width="9" height="1" fill="#808080"/><rect x="15" y="12" width="1" height="1" fill="#fff"/><rect x="7" y="13" width="9" height="1" fill="#fff"/></svg>
<svg class="a" style="left:217px;top:32px" width="13" height="13" shape-rendering="crispEdges"><rect x="0" y="0" width="4" height="1" fill="#808080"/><rect x="4" y="0" width="1" height="1" fill="#fff"/><rect x="8" y="0" width="4" height="1" fill="#808080"/><rect x="0" y="1" width="1" height="1" fill="#808080"/><rect x="1" y="1" width="4" height="1" fill="#fff"/><rect x="8" y="1" width="1" height="1" fill="#808080"/><rect x="9" y="1" width="3" height="1" fill="#fff"/><rect x="0" y="2" width="1" height="1" fill="#808080"/><rect x="1" y="2" width="1" height="1" fill="#fff"/><rect x="11" y="2" width="1" height="1" fill="#808080"/><rect x="12" y="2" width="1" height="1" fill="#fff"/><rect x="0" y="3" width="1" height="1" fill="#808080"/><rect x="1" y="3" width="1" height="1" fill="#fff"/><rect x="11" y="3" width="1" height="1" fill="#808080"/><rect x="12" y="3" width="1" height="1" fill="#fff"/><rect x="0" y="8" width="1" height="1" fill="#808080"/><rect x="1" y="8" width="1" height="1" fill="#fff"/><rect x="11" y="8" width="1" height="1" fill="#808080"/><rect x="12" y="8" width="1" height="1" fill="#fff"/><rect x="0" y="9" width="1" height="1" fill="#808080"/><rect x="1" y="9" width="1" height="1" fill="#fff"/><rect x="11" y="9" width="1" height="1" fill="#808080"/><rect x="12" y="9" width="1" height="1" fill="#fff"/><rect x="0" y="10" width="1" height="1" fill="#808080"/><rect x="1" y="10" width="1" height="1" fill="#fff"/><rect x="8" y="10" width="3" height="1" fill="#808080"/><rect x="11" y="10" width="1" height="1" fill="#fff"/><rect x="0" y="11" width="4" height="1" fill="#808080"/><rect x="4" y="11" width="1" height="1" fill="#fff"/><rect x="9" y="11" width="3" height="1" fill="#fff"/><rect x="1" y="12" width="3" height="1" fill="#fff"/></svg>
<!-- tree -->
<div class="a dk" style="left:3px;top:50px;width:227px;height:1px"></div>
<div class="a dk" style="left:3px;top:50px;width:1px;height:531px"></div><div class="a hl" style="left:3px;top:581px;width:227px;height:1px"></div>
<div class="a hl" style="left:4px;top:51px;width:226px;height:531px"></div>
<svg class="a" style="left:4px;top:51px" width="226" height="100" viewBox="4 51 226 100" shape-rendering="crispEdges">
 <defs>
  <pattern id="dv" width="1" height="2" patternUnits="userSpaceOnUse"><rect width="1" height="1" fill="#808080"/></pattern>
  <pattern id="dh" width="2" height="1" patternUnits="userSpaceOnUse"><rect width="1" height="1" fill="#808080"/></pattern>
  <g id="minus"><rect x="0.5" y="0.5" width="8" height="8" fill="#fff" stroke="#808080"/><rect x="2" y="4" width="5" height="1" fill="#000"/></g>
  <g id="plus"><rect x="0.5" y="0.5" width="8" height="8" fill="#fff" stroke="#808080"/><rect x="2" y="4" width="5" height="1" fill="#000"/><rect x="4" y="2" width="1" height="5" fill="#000"/></g>
  <g id="key">
   <path d="M3.5 0.5h5v5h-1v2h-1v6h1v1h-1v1h-2v-1h-1v-2h1v-1h-1v-1h1v-3h-1v-2h-1z" fill="#ff0" stroke="#000"/>
   <rect x="5" y="2" width="2" height="2" fill="#000"/>
   <rect x="0" y="10" width="2" height="5" fill="#00f"/><rect x="2" y="12" width="1" height="3" fill="#800080"/>
   <rect x="10" y="9" width="1" height="6" fill="#f00"/><rect x="11" y="6" width="1" height="9" fill="#800000"/><rect x="13" y="8" width="1" height="7" fill="#000"/>
  </g>
 </defs>
 <rect x="18" y="59" width="6" height="1" fill="url(#dh)"/>
 <rect x="32" y="67" width="1" height="20" fill="url(#dv)"/>
 <rect x="37" y="75" width="6" height="1" fill="url(#dh)"/>
 <rect x="37" y="91" width="6" height="1" fill="url(#dh)"/>
 <rect x="51" y="99" width="1" height="36" fill="url(#dv)"/>
 <rect x="56" y="107" width="6" height="1" fill="url(#dh)"/>
 <rect x="56" y="139" width="6" height="1" fill="url(#dh)"/>
 <rect x="70" y="115" width="1" height="9" fill="url(#dv)"/>
 <rect x="70" y="123" width="11" height="1" fill="url(#dh)"/>
 <use href="#minus" x="9" y="55"/>
 <use href="#plus" x="28" y="71"/>
 <use href="#minus" x="28" y="87"/>
 <use href="#minus" x="47" y="103"/>
 <use href="#plus" x="47" y="135"/>
</svg>
<!--TREEICONS-->
<svg class="a" style="left:25px;top:51px" width="16" height="16" shape-rendering="crispEdges"><rect x="7" y="0" width="6" height="1" fill="#000"/><rect x="6" y="1" width="1" height="1" fill="#000"/><rect x="7" y="1" width="6" height="1" fill="#ff0"/><rect x="13" y="1" width="1" height="1" fill="#000"/><rect x="6" y="2" width="1" height="1" fill="#000"/><rect x="7" y="2" width="2" height="1" fill="#ff0"/><rect x="9" y="2" width="2" height="1" fill="#000"/><rect x="11" y="2" width="2" height="1" fill="#ff0"/><rect x="13" y="2" width="1" height="1" fill="#000"/><rect x="6" y="3" width="1" height="1" fill="#000"/><rect x="7" y="3" width="2" height="1" fill="#ff0"/><rect x="9" y="3" width="1" height="1" fill="#000"/><rect x="10" y="3" width="1" height="1" fill="#fff"/><rect x="11" y="3" width="1" height="1" fill="#000"/><rect x="12" y="3" width="1" height="1" fill="#ff0"/><rect x="13" y="3" width="1" height="1" fill="#000"/><rect x="1" y="4" width="4" height="1" fill="#000"/><rect x="6" y="4" width="1" height="1" fill="#000"/><rect x="7" y="4" width="2" height="1" fill="#ff0"/><rect x="9" y="4" width="2" height="1" fill="#000"/><rect x="11" y="4" width="2" height="1" fill="#ff0"/><rect x="13" y="4" width="1" height="1" fill="#000"/><rect x="0" y="5" width="1" height="1" fill="#000"/><rect x="1" y="5" width="4" height="1" fill="#ff0"/><rect x="5" y="5" width="1" height="1" fill="#000"/><rect x="7" y="5" width="1" height="1" fill="#000"/><rect x="8" y="5" width="4" height="1" fill="#ff0"/><rect x="12" y="5" width="1" height="1" fill="#000"/><rect x="15" y="5" width="1" height="1" fill="#800000"/><rect x="0" y="6" width="1" height="1" fill="#000"/><rect x="1" y="6" width="5" height="1" fill="#ff0"/><rect x="6" y="6" width="3" height="1" fill="#000"/><rect x="9" y="6" width="2" height="1" fill="#ff0"/><rect x="11" y="6" width="2" height="1" fill="#000"/><rect x="15" y="6" width="1" height="1" fill="#800000"/><rect x="0" y="7" width="1" height="1" fill="#000"/><rect x="1" y="7" width="8" height="1" fill="#fff"/><rect x="9" y="7" width="1" height="1" fill="#000"/><rect x="10" y="7" width="1" height="1" fill="#ff0"/><rect x="11" y="7" width="1" height="1" fill="#000"/><rect x="15" y="7" width="1" height="1" fill="#800000"/><rect x="0" y="8" width="1" height="1" fill="#000"/><rect x="1" y="8" width="8" height="1" fill="#ff0"/><rect x="9" y="8" width="1" height="1" fill="#000"/><rect x="10" y="8" width="1" height="1" fill="#ff0"/><rect x="11" y="8" width="1" height="1" fill="#000"/><rect x="15" y="8" width="1" height="1" fill="#800000"/><rect x="0" y="9" width="1" height="1" fill="#000"/><rect x="1" y="9" width="8" height="1" fill="#ff0"/><rect x="9" y="9" width="1" height="1" fill="#000"/><rect x="10" y="9" width="1" height="1" fill="#ff0"/><rect x="11" y="9" width="1" height="1" fill="#000"/><rect x="15" y="9" width="1" height="1" fill="#800000"/><rect x="0" y="10" width="1" height="1" fill="#000"/><rect x="1" y="10" width="8" height="1" fill="#ff0"/><rect x="9" y="10" width="1" height="1" fill="#000"/><rect x="10" y="10" width="1" height="1" fill="#ff0"/><rect x="11" y="10" width="1" height="1" fill="#000"/><rect x="15" y="10" width="1" height="1" fill="#800000"/><rect x="0" y="11" width="1" height="1" fill="#000"/><rect x="1" y="11" width="8" height="1" fill="#ff0"/><rect x="9" y="11" width="1" height="1" fill="#000"/><rect x="10" y="11" width="1" height="1" fill="#ff0"/><rect x="11" y="11" width="1" height="1" fill="#000"/><rect x="13" y="11" width="1" height="1" fill="#f00"/><rect x="14" y="11" width="1" height="1" fill="#000"/><rect x="15" y="11" width="1" height="1" fill="#800000"/><rect x="0" y="12" width="10" height="1" fill="#000"/><rect x="10" y="12" width="1" height="1" fill="#ff0"/><rect x="11" y="12" width="1" height="1" fill="#000"/><rect x="13" y="12" width="1" height="1" fill="#f00"/><rect x="14" y="12" width="1" height="1" fill="#000"/><rect x="15" y="12" width="1" height="1" fill="#800000"/><rect x="3" y="13" width="2" height="1" fill="#00f"/><rect x="5" y="13" width="2" height="1" fill="#800080"/><rect x="8" y="13" width="1" height="1" fill="#000"/><rect x="9" y="13" width="2" height="1" fill="#ff0"/><rect x="11" y="13" width="1" height="1" fill="#000"/><rect x="13" y="13" width="1" height="1" fill="#f00"/><rect x="14" y="13" width="1" height="1" fill="#000"/><rect x="15" y="13" width="1" height="1" fill="#800000"/><rect x="9" y="14" width="2" height="1" fill="#000"/><rect x="13" y="14" width="1" height="1" fill="#f00"/><rect x="14" y="14" width="1" height="1" fill="#000"/><rect x="15" y="14" width="1" height="1" fill="#800000"/></svg>
<svg class="a" style="left:43px;top:67px" width="17" height="16" shape-rendering="crispEdges"><rect x="5" y="0" width="6" height="1" fill="#000"/><rect x="4" y="1" width="1" height="1" fill="#000"/><rect x="5" y="1" width="6" height="1" fill="#ff0"/><rect x="11" y="1" width="1" height="1" fill="#000"/><rect x="4" y="2" width="1" height="1" fill="#000"/><rect x="5" y="2" width="2" height="1" fill="#ff0"/><rect x="7" y="2" width="3" height="1" fill="#000"/><rect x="10" y="2" width="1" height="1" fill="#ff0"/><rect x="11" y="2" width="1" height="1" fill="#000"/><rect x="4" y="3" width="1" height="1" fill="#000"/><rect x="5" y="3" width="2" height="1" fill="#ff0"/><rect x="7" y="3" width="1" height="1" fill="#000"/><rect x="8" y="3" width="1" height="1" fill="#fff"/><rect x="9" y="3" width="1" height="1" fill="#000"/><rect x="10" y="3" width="1" height="1" fill="#ff0"/><rect x="11" y="3" width="1" height="1" fill="#000"/><rect x="4" y="4" width="1" height="1" fill="#000"/><rect x="5" y="4" width="2" height="1" fill="#ff0"/><rect x="7" y="4" width="3" height="1" fill="#000"/><rect x="10" y="4" width="1" height="1" fill="#ff0"/><rect x="11" y="4" width="1" height="1" fill="#000"/><rect x="4" y="5" width="1" height="1" fill="#000"/><rect x="5" y="5" width="6" height="1" fill="#ff0"/><rect x="11" y="5" width="1" height="1" fill="#000"/><rect x="13" y="5" width="1" height="1" fill="#800000"/><rect x="5" y="6" width="2" height="1" fill="#000"/><rect x="7" y="6" width="3" height="1" fill="#ff0"/><rect x="10" y="6" width="2" height="1" fill="#000"/><rect x="13" y="6" width="1" height="1" fill="#800000"/><rect x="6" y="7" width="1" height="1" fill="#000"/><rect x="7" y="7" width="3" height="1" fill="#ff0"/><rect x="10" y="7" width="1" height="1" fill="#000"/><rect x="13" y="7" width="1" height="1" fill="#800000"/><rect x="5" y="8" width="2" height="1" fill="#000"/><rect x="7" y="8" width="3" height="1" fill="#ff0"/><rect x="10" y="8" width="1" height="1" fill="#000"/><rect x="13" y="8" width="1" height="1" fill="#800000"/><rect x="16" y="8" width="1" height="1" fill="#000"/><rect x="6" y="9" width="1" height="1" fill="#000"/><rect x="7" y="9" width="3" height="1" fill="#ff0"/><rect x="10" y="9" width="1" height="1" fill="#000"/><rect x="13" y="9" width="1" height="1" fill="#800000"/><rect x="16" y="9" width="1" height="1" fill="#000"/><rect x="1" y="10" width="2" height="1" fill="#00f"/><rect x="6" y="10" width="1" height="1" fill="#000"/><rect x="7" y="10" width="3" height="1" fill="#ff0"/><rect x="10" y="10" width="1" height="1" fill="#000"/><rect x="13" y="10" width="1" height="1" fill="#800000"/><rect x="16" y="10" width="1" height="1" fill="#000"/><rect x="1" y="11" width="2" height="1" fill="#00f"/><rect x="6" y="11" width="1" height="1" fill="#000"/><rect x="7" y="11" width="3" height="1" fill="#ff0"/><rect x="10" y="11" width="2" height="1" fill="#000"/><rect x="12" y="11" width="1" height="1" fill="#f00"/><rect x="13" y="11" width="1" height="1" fill="#800000"/><rect x="16" y="11" width="1" height="1" fill="#000"/><rect x="1" y="12" width="2" height="1" fill="#00f"/><rect x="3" y="12" width="1" height="1" fill="#800080"/><rect x="6" y="12" width="1" height="1" fill="#000"/><rect x="7" y="12" width="3" height="1" fill="#ff0"/><rect x="10" y="12" width="1" height="1" fill="#000"/><rect x="12" y="12" width="1" height="1" fill="#f00"/><rect x="13" y="12" width="1" height="1" fill="#800000"/><rect x="14" y="12" width="1" height="1" fill="#000"/><rect x="16" y="12" width="1" height="1" fill="#000"/><rect x="1" y="13" width="2" height="1" fill="#00f"/><rect x="3" y="13" width="1" height="1" fill="#800080"/><rect x="5" y="13" width="2" height="1" fill="#000"/><rect x="7" y="13" width="3" height="1" fill="#ff0"/><rect x="10" y="13" width="1" height="1" fill="#000"/><rect x="12" y="13" width="1" height="1" fill="#f00"/><rect x="13" y="13" width="1" height="1" fill="#800000"/><rect x="14" y="13" width="1" height="1" fill="#000"/><rect x="16" y="13" width="1" height="1" fill="#000"/><rect x="1" y="14" width="2" height="1" fill="#00f"/><rect x="3" y="14" width="1" height="1" fill="#800080"/><rect x="6" y="14" width="1" height="1" fill="#000"/><rect x="7" y="14" width="3" height="1" fill="#ff0"/><rect x="10" y="14" width="1" height="1" fill="#000"/><rect x="12" y="14" width="1" height="1" fill="#f00"/><rect x="13" y="14" width="1" height="1" fill="#800000"/><rect x="14" y="14" width="1" height="1" fill="#000"/><rect x="16" y="14" width="1" height="1" fill="#000"/><rect x="7" y="15" width="3" height="1" fill="#000"/></svg>
<svg class="a" style="left:43px;top:83px" width="17" height="16" shape-rendering="crispEdges"><rect x="5" y="0" width="6" height="1" fill="#000"/><rect x="4" y="1" width="1" height="1" fill="#000"/><rect x="5" y="1" width="6" height="1" fill="#ff0"/><rect x="11" y="1" width="1" height="1" fill="#000"/><rect x="4" y="2" width="1" height="1" fill="#000"/><rect x="5" y="2" width="2" height="1" fill="#ff0"/><rect x="7" y="2" width="3" height="1" fill="#000"/><rect x="10" y="2" width="1" height="1" fill="#ff0"/><rect x="11" y="2" width="1" height="1" fill="#000"/><rect x="4" y="3" width="1" height="1" fill="#000"/><rect x="5" y="3" width="2" height="1" fill="#ff0"/><rect x="7" y="3" width="1" height="1" fill="#000"/><rect x="8" y="3" width="1" height="1" fill="#fff"/><rect x="9" y="3" width="1" height="1" fill="#000"/><rect x="10" y="3" width="1" height="1" fill="#ff0"/><rect x="11" y="3" width="1" height="1" fill="#000"/><rect x="4" y="4" width="1" height="1" fill="#000"/><rect x="5" y="4" width="2" height="1" fill="#ff0"/><rect x="7" y="4" width="3" height="1" fill="#000"/><rect x="10" y="4" width="1" height="1" fill="#ff0"/><rect x="11" y="4" width="1" height="1" fill="#000"/><rect x="4" y="5" width="1" height="1" fill="#000"/><rect x="5" y="5" width="6" height="1" fill="#ff0"/><rect x="11" y="5" width="1" height="1" fill="#000"/><rect x="13" y="5" width="1" height="1" fill="#800000"/><rect x="5" y="6" width="2" height="1" fill="#000"/><rect x="7" y="6" width="3" height="1" fill="#ff0"/><rect x="10" y="6" width="2" height="1" fill="#000"/><rect x="13" y="6" width="1" height="1" fill="#800000"/><rect x="6" y="7" width="1" height="1" fill="#000"/><rect x="7" y="7" width="3" height="1" fill="#ff0"/><rect x="10" y="7" width="1" height="1" fill="#000"/><rect x="13" y="7" width="1" height="1" fill="#800000"/><rect x="5" y="8" width="2" height="1" fill="#000"/><rect x="7" y="8" width="3" height="1" fill="#ff0"/><rect x="10" y="8" width="1" height="1" fill="#000"/><rect x="13" y="8" width="1" height="1" fill="#800000"/><rect x="16" y="8" width="1" height="1" fill="#000"/><rect x="6" y="9" width="1" height="1" fill="#000"/><rect x="7" y="9" width="3" height="1" fill="#ff0"/><rect x="10" y="9" width="1" height="1" fill="#000"/><rect x="13" y="9" width="1" height="1" fill="#800000"/><rect x="16" y="9" width="1" height="1" fill="#000"/><rect x="1" y="10" width="2" height="1" fill="#00f"/><rect x="6" y="10" width="1" height="1" fill="#000"/><rect x="7" y="10" width="3" height="1" fill="#ff0"/><rect x="10" y="10" width="1" height="1" fill="#000"/><rect x="13" y="10" width="1" height="1" fill="#800000"/><rect x="16" y="10" width="1" height="1" fill="#000"/><rect x="1" y="11" width="2" height="1" fill="#00f"/><rect x="6" y="11" width="1" height="1" fill="#000"/><rect x="7" y="11" width="3" height="1" fill="#ff0"/><rect x="10" y="11" width="2" height="1" fill="#000"/><rect x="12" y="11" width="1" height="1" fill="#f00"/><rect x="13" y="11" width="1" height="1" fill="#800000"/><rect x="16" y="11" width="1" height="1" fill="#000"/><rect x="1" y="12" width="2" height="1" fill="#00f"/><rect x="3" y="12" width="1" height="1" fill="#800080"/><rect x="6" y="12" width="1" height="1" fill="#000"/><rect x="7" y="12" width="3" height="1" fill="#ff0"/><rect x="10" y="12" width="1" height="1" fill="#000"/><rect x="12" y="12" width="1" height="1" fill="#f00"/><rect x="13" y="12" width="1" height="1" fill="#800000"/><rect x="14" y="12" width="1" height="1" fill="#000"/><rect x="16" y="12" width="1" height="1" fill="#000"/><rect x="1" y="13" width="2" height="1" fill="#00f"/><rect x="3" y="13" width="1" height="1" fill="#800080"/><rect x="5" y="13" width="2" height="1" fill="#000"/><rect x="7" y="13" width="3" height="1" fill="#ff0"/><rect x="10" y="13" width="1" height="1" fill="#000"/><rect x="12" y="13" width="1" height="1" fill="#f00"/><rect x="13" y="13" width="1" height="1" fill="#800000"/><rect x="14" y="13" width="1" height="1" fill="#000"/><rect x="16" y="13" width="1" height="1" fill="#000"/><rect x="1" y="14" width="2" height="1" fill="#00f"/><rect x="3" y="14" width="1" height="1" fill="#800080"/><rect x="6" y="14" width="1" height="1" fill="#000"/><rect x="7" y="14" width="3" height="1" fill="#ff0"/><rect x="10" y="14" width="1" height="1" fill="#000"/><rect x="12" y="14" width="1" height="1" fill="#f00"/><rect x="13" y="14" width="1" height="1" fill="#800000"/><rect x="14" y="14" width="1" height="1" fill="#000"/><rect x="16" y="14" width="1" height="1" fill="#000"/><rect x="7" y="15" width="3" height="1" fill="#000"/></svg>
<svg class="a" style="left:63px;top:99px" width="16" height="16" shape-rendering="crispEdges"><rect x="6" y="0" width="10" height="1" fill="#000"/><rect x="6" y="1" width="1" height="1" fill="#000"/><rect x="7" y="1" width="1" height="1" fill="#fff"/><rect x="8" y="1" width="1" height="1" fill="#000"/><rect x="9" y="1" width="1" height="1" fill="#c0c0c0"/><rect x="10" y="1" width="1" height="1" fill="#0ff"/><rect x="11" y="1" width="2" height="1" fill="#c0c0c0"/><rect x="13" y="1" width="1" height="1" fill="#000"/><rect x="14" y="1" width="1" height="1" fill="#fff"/><rect x="15" y="1" width="1" height="1" fill="#000"/><rect x="6" y="2" width="3" height="1" fill="#000"/><rect x="9" y="2" width="2" height="1" fill="#c0c0c0"/><rect x="11" y="2" width="1" height="1" fill="#0ff"/><rect x="12" y="2" width="1" height="1" fill="#c0c0c0"/><rect x="13" y="2" width="3" height="1" fill="#000"/><rect x="6" y="3" width="1" height="1" fill="#000"/><rect x="7" y="3" width="1" height="1" fill="#fff"/><rect x="8" y="3" width="1" height="1" fill="#000"/><rect x="9" y="3" width="2" height="1" fill="#c0c0c0"/><rect x="11" y="3" width="1" height="1" fill="#0ff"/><rect x="12" y="3" width="1" height="1" fill="#c0c0c0"/><rect x="13" y="3" width="1" height="1" fill="#000"/><rect x="14" y="3" width="1" height="1" fill="#fff"/><rect x="15" y="3" width="1" height="1" fill="#000"/><rect x="1" y="4" width="4" height="1" fill="#000"/><rect x="6" y="4" width="3" height="1" fill="#000"/><rect x="9" y="4" width="4" height="1" fill="#c0c0c0"/><rect x="13" y="4" width="3" height="1" fill="#000"/><rect x="0" y="5" width="1" height="1" fill="#000"/><rect x="1" y="5" width="4" height="1" fill="#ff0"/><rect x="5" y="5" width="1" height="1" fill="#000"/><rect x="7" y="5" width="1" height="1" fill="#fff"/><rect x="8" y="5" width="1" height="1" fill="#000"/><rect x="9" y="5" width="1" height="1" fill="#c0c0c0"/><rect x="10" y="5" width="1" height="1" fill="#0ff"/><rect x="11" y="5" width="2" height="1" fill="#c0c0c0"/><rect x="13" y="5" width="1" height="1" fill="#000"/><rect x="14" y="5" width="1" height="1" fill="#fff"/><rect x="15" y="5" width="1" height="1" fill="#000"/><rect x="0" y="6" width="1" height="1" fill="#000"/><rect x="1" y="6" width="4" height="1" fill="#ff0"/><rect x="5" y="6" width="4" height="1" fill="#000"/><rect x="9" y="6" width="2" height="1" fill="#c0c0c0"/><rect x="11" y="6" width="1" height="1" fill="#0ff"/><rect x="12" y="6" width="1" height="1" fill="#c0c0c0"/><rect x="13" y="6" width="3" height="1" fill="#000"/><rect x="0" y="7" width="1" height="1" fill="#000"/><rect x="1" y="7" width="6" height="1" fill="#fff"/><rect x="7" y="7" width="2" height="1" fill="#000"/><rect x="9" y="7" width="4" height="1" fill="#c0c0c0"/><rect x="13" y="7" width="1" height="1" fill="#000"/><rect x="14" y="7" width="1" height="1" fill="#fff"/><rect x="15" y="7" width="1" height="1" fill="#000"/><rect x="0" y="8" width="1" height="1" fill="#000"/><rect x="1" y="8" width="6" height="1" fill="#ff0"/><rect x="7" y="8" width="2" height="1" fill="#000"/><rect x="9" y="8" width="2" height="1" fill="#c0c0c0"/><rect x="11" y="8" width="1" height="1" fill="#0ff"/><rect x="12" y="8" width="1" height="1" fill="#c0c0c0"/><rect x="13" y="8" width="3" height="1" fill="#000"/><rect x="0" y="9" width="1" height="1" fill="#000"/><rect x="1" y="9" width="6" height="1" fill="#ff0"/><rect x="7" y="9" width="2" height="1" fill="#000"/><rect x="9" y="9" width="1" height="1" fill="#c0c0c0"/><rect x="10" y="9" width="1" height="1" fill="#0ff"/><rect x="11" y="9" width="2" height="1" fill="#c0c0c0"/><rect x="13" y="9" width="1" height="1" fill="#000"/><rect x="14" y="9" width="1" height="1" fill="#fff"/><rect x="15" y="9" width="1" height="1" fill="#000"/><rect x="0" y="10" width="1" height="1" fill="#000"/><rect x="1" y="10" width="6" height="1" fill="#ff0"/><rect x="7" y="10" width="2" height="1" fill="#000"/><rect x="9" y="10" width="2" height="1" fill="#c0c0c0"/><rect x="11" y="10" width="1" height="1" fill="#0ff"/><rect x="12" y="10" width="1" height="1" fill="#c0c0c0"/><rect x="13" y="10" width="3" height="1" fill="#000"/><rect x="0" y="11" width="1" height="1" fill="#000"/><rect x="1" y="11" width="6" height="1" fill="#ff0"/><rect x="7" y="11" width="2" height="1" fill="#000"/><rect x="9" y="11" width="4" height="1" fill="#c0c0c0"/><rect x="13" y="11" width="1" height="1" fill="#000"/><rect x="14" y="11" width="1" height="1" fill="#fff"/><rect x="15" y="11" width="1" height="1" fill="#000"/><rect x="0" y="12" width="9" height="1" fill="#000"/><rect x="9" y="12" width="1" height="1" fill="#c0c0c0"/><rect x="10" y="12" width="1" height="1" fill="#0ff"/><rect x="11" y="12" width="2" height="1" fill="#c0c0c0"/><rect x="13" y="12" width="3" height="1" fill="#000"/><rect x="6" y="13" width="1" height="1" fill="#000"/><rect x="7" y="13" width="1" height="1" fill="#fff"/><rect x="8" y="13" width="1" height="1" fill="#000"/><rect x="9" y="13" width="2" height="1" fill="#c0c0c0"/><rect x="11" y="13" width="1" height="1" fill="#0ff"/><rect x="12" y="13" width="1" height="1" fill="#c0c0c0"/><rect x="13" y="13" width="1" height="1" fill="#000"/><rect x="14" y="13" width="1" height="1" fill="#fff"/><rect x="15" y="13" width="1" height="1" fill="#000"/><rect x="6" y="14" width="10" height="1" fill="#000"/></svg>
<svg class="a" style="left:82px;top:115px" width="17" height="16" shape-rendering="crispEdges"><rect x="10" y="0" width="4" height="1" fill="#000"/><rect x="9" y="1" width="1" height="1" fill="#000"/><rect x="10" y="1" width="1" height="1" fill="#fff"/><rect x="11" y="1" width="3" height="1" fill="#000"/><rect x="8" y="2" width="3" height="1" fill="#000"/><rect x="11" y="2" width="1" height="1" fill="#dcc8c8"/><rect x="12" y="2" width="2" height="1" fill="#0ff"/><rect x="14" y="2" width="1" height="1" fill="#000"/><rect x="7" y="3" width="1" height="1" fill="#000"/><rect x="8" y="3" width="1" height="1" fill="#fff"/><rect x="9" y="3" width="1" height="1" fill="#000"/><rect x="10" y="3" width="1" height="1" fill="#dcc8c8"/><rect x="11" y="3" width="2" height="1" fill="#0ff"/><rect x="13" y="3" width="1" height="1" fill="#dcc8c8"/><rect x="14" y="3" width="2" height="1" fill="#000"/><rect x="6" y="4" width="3" height="1" fill="#000"/><rect x="9" y="4" width="2" height="1" fill="#0ff"/><rect x="11" y="4" width="1" height="1" fill="#dcc8c8"/><rect x="12" y="4" width="2" height="1" fill="#0ff"/><rect x="14" y="4" width="2" height="1" fill="#000"/><rect x="5" y="5" width="1" height="1" fill="#000"/><rect x="6" y="5" width="1" height="1" fill="#fff"/><rect x="7" y="5" width="1" height="1" fill="#000"/><rect x="8" y="5" width="1" height="1" fill="#dcc8c8"/><rect x="9" y="5" width="2" height="1" fill="#0ff"/><rect x="11" y="5" width="2" height="1" fill="#dcc8c8"/><rect x="13" y="5" width="1" height="1" fill="#000"/><rect x="14" y="5" width="1" height="1" fill="#fff"/><rect x="15" y="5" width="1" height="1" fill="#000"/><rect x="4" y="6" width="3" height="1" fill="#000"/><rect x="7" y="6" width="1" height="1" fill="#dcc8c8"/><rect x="8" y="6" width="1" height="1" fill="#0ff"/><rect x="9" y="6" width="1" height="1" fill="#dcc8c8"/><rect x="10" y="6" width="2" height="1" fill="#0ff"/><rect x="12" y="6" width="1" height="1" fill="#dcc8c8"/><rect x="13" y="6" width="2" height="1" fill="#000"/><rect x="3" y="7" width="1" height="1" fill="#000"/><rect x="4" y="7" width="1" height="1" fill="#fff"/><rect x="5" y="7" width="1" height="1" fill="#000"/><rect x="6" y="7" width="1" height="1" fill="#dcc8c8"/><rect x="7" y="7" width="1" height="1" fill="#0ff"/><rect x="8" y="7" width="2" height="1" fill="#dcc8c8"/><rect x="10" y="7" width="2" height="1" fill="#0ff"/><rect x="12" y="7" width="1" height="1" fill="#dcc8c8"/><rect x="13" y="7" width="1" height="1" fill="#000"/><rect x="14" y="7" width="1" height="1" fill="#fff"/><rect x="2" y="8" width="3" height="1" fill="#000"/><rect x="5" y="8" width="2" height="1" fill="#dcc8c8"/><rect x="7" y="8" width="2" height="1" fill="#0ff"/><rect x="9" y="8" width="2" height="1" fill="#dcc8c8"/><rect x="11" y="8" width="3" height="1" fill="#000"/><rect x="1" y="9" width="1" height="1" fill="#000"/><rect x="2" y="9" width="1" height="1" fill="#fff"/><rect x="3" y="9" width="1" height="1" fill="#000"/><rect x="4" y="9" width="1" height="1" fill="#0ff"/><rect x="5" y="9" width="3" height="1" fill="#dcc8c8"/><rect x="8" y="9" width="2" height="1" fill="#0ff"/><rect x="10" y="9" width="1" height="1" fill="#dcc8c8"/><rect x="11" y="9" width="1" height="1" fill="#000"/><rect x="12" y="9" width="1" height="1" fill="#fff"/><rect x="13" y="9" width="1" height="1" fill="#000"/><rect x="1" y="10" width="2" height="1" fill="#000"/><rect x="3" y="10" width="1" height="1" fill="#dcc8c8"/><rect x="4" y="10" width="1" height="1" fill="#0ff"/><rect x="5" y="10" width="2" height="1" fill="#dcc8c8"/><rect x="7" y="10" width="1" height="1" fill="#0ff"/><rect x="8" y="10" width="2" height="1" fill="#dcc8c8"/><rect x="10" y="10" width="3" height="1" fill="#000"/><rect x="2" y="11" width="1" height="1" fill="#000"/><rect x="3" y="11" width="2" height="1" fill="#dcc8c8"/><rect x="5" y="11" width="2" height="1" fill="#0ff"/><rect x="7" y="11" width="2" height="1" fill="#dcc8c8"/><rect x="9" y="11" width="1" height="1" fill="#000"/><rect x="10" y="11" width="1" height="1" fill="#fff"/><rect x="11" y="11" width="1" height="1" fill="#000"/><rect x="3" y="12" width="1" height="1" fill="#dcc8c8"/><rect x="4" y="12" width="2" height="1" fill="#0ff"/><rect x="6" y="12" width="2" height="1" fill="#dcc8c8"/><rect x="8" y="12" width="3" height="1" fill="#000"/><rect x="4" y="13" width="1" height="1" fill="#0ff"/><rect x="5" y="13" width="2" height="1" fill="#dcc8c8"/><rect x="7" y="13" width="1" height="1" fill="#000"/><rect x="8" y="13" width="1" height="1" fill="#fff"/><rect x="9" y="13" width="1" height="1" fill="#000"/><rect x="5" y="14" width="4" height="1" fill="#000"/><rect x="6" y="15" width="2" height="1" fill="#000"/></svg>
<svg class="a" style="left:63px;top:132px" width="16" height="15" shape-rendering="crispEdges"><rect x="5" y="0" width="11" height="1" fill="#000"/><rect x="5" y="1" width="1" height="1" fill="#000"/><rect x="6" y="1" width="9" height="1" fill="#fff"/><rect x="15" y="1" width="1" height="1" fill="#000"/><rect x="5" y="2" width="1" height="1" fill="#000"/><rect x="6" y="2" width="1" height="1" fill="#fff"/><rect x="7" y="2" width="2" height="1" fill="#00f"/><rect x="9" y="2" width="1" height="1" fill="#fff"/><rect x="10" y="2" width="1" height="1" fill="#00f"/><rect x="11" y="2" width="2" height="1" fill="#fff"/><rect x="13" y="2" width="2" height="1" fill="#00f"/><rect x="15" y="2" width="1" height="1" fill="#000"/><rect x="5" y="3" width="1" height="1" fill="#000"/><rect x="6" y="3" width="1" height="1" fill="#00f"/><rect x="7" y="3" width="2" height="1" fill="#fff"/><rect x="9" y="3" width="1" height="1" fill="#00f"/><rect x="10" y="3" width="1" height="1" fill="#fff"/><rect x="11" y="3" width="1" height="1" fill="#00f"/><rect x="12" y="3" width="1" height="1" fill="#fff"/><rect x="13" y="3" width="1" height="1" fill="#00f"/><rect x="14" y="3" width="1" height="1" fill="#fff"/><rect x="15" y="3" width="1" height="1" fill="#000"/><rect x="5" y="4" width="1" height="1" fill="#000"/><rect x="6" y="4" width="1" height="1" fill="#fff"/><rect x="7" y="4" width="1" height="1" fill="#00f"/><rect x="8" y="4" width="1" height="1" fill="#fff"/><rect x="9" y="4" width="1" height="1" fill="#00f"/><rect x="10" y="4" width="1" height="1" fill="#fff"/><rect x="11" y="4" width="1" height="1" fill="#00f"/><rect x="12" y="4" width="1" height="1" fill="#fff"/><rect x="13" y="4" width="1" height="1" fill="#00f"/><rect x="14" y="4" width="1" height="1" fill="#fff"/><rect x="15" y="4" width="1" height="1" fill="#000"/><rect x="2" y="5" width="4" height="1" fill="#000"/><rect x="6" y="5" width="2" height="1" fill="#fff"/><rect x="8" y="5" width="2" height="1" fill="#00f"/><rect x="10" y="5" width="1" height="1" fill="#fff"/><rect x="11" y="5" width="1" height="1" fill="#00f"/><rect x="12" y="5" width="1" height="1" fill="#fff"/><rect x="13" y="5" width="1" height="1" fill="#00f"/><rect x="14" y="5" width="1" height="1" fill="#fff"/><rect x="15" y="5" width="1" height="1" fill="#000"/><rect x="1" y="6" width="1" height="1" fill="#000"/><rect x="2" y="6" width="4" height="1" fill="#ff0"/><rect x="6" y="6" width="1" height="1" fill="#000"/><rect x="7" y="6" width="2" height="1" fill="#00f"/><rect x="9" y="6" width="2" height="1" fill="#fff"/><rect x="11" y="6" width="2" height="1" fill="#00f"/><rect x="13" y="6" width="1" height="1" fill="#fff"/><rect x="14" y="6" width="1" height="1" fill="#00f"/><rect x="15" y="6" width="1" height="1" fill="#000"/><rect x="0" y="7" width="1" height="1" fill="#000"/><rect x="1" y="7" width="6" height="1" fill="#ff0"/><rect x="7" y="7" width="1" height="1" fill="#000"/><rect x="8" y="7" width="7" height="1" fill="#fff"/><rect x="15" y="7" width="1" height="1" fill="#000"/><rect x="0" y="8" width="1" height="1" fill="#000"/><rect x="1" y="8" width="9" height="1" fill="#fff"/><rect x="10" y="8" width="6" height="1" fill="#000"/><rect x="0" y="9" width="1" height="1" fill="#000"/><rect x="1" y="9" width="8" height="1" fill="#ff0"/><rect x="9" y="9" width="1" height="1" fill="#000"/><rect x="0" y="10" width="1" height="1" fill="#000"/><rect x="1" y="10" width="8" height="1" fill="#ff0"/><rect x="9" y="10" width="1" height="1" fill="#000"/><rect x="0" y="11" width="1" height="1" fill="#000"/><rect x="1" y="11" width="8" height="1" fill="#ff0"/><rect x="9" y="11" width="1" height="1" fill="#000"/><rect x="0" y="12" width="1" height="1" fill="#000"/><rect x="1" y="12" width="8" height="1" fill="#ff0"/><rect x="9" y="12" width="1" height="1" fill="#000"/><rect x="0" y="13" width="10" height="1" fill="#000"/></svg>
<div class="t up" style="left:44px;top:53px">INDEX IMPACT ANALYZER</div>
<div class="t up" style="left:63px;top:69px">ANALYZER1</div>
<div class="t up" style="left:63px;top:85px">ANALYZER2</div>
<div class="t" style="left:82px;top:101px">Scenarios Analyzed</div>
<div class="a" style="left:100px;top:115px;width:117px;height:15px;background:#0a246a;outline:1px dotted #d4c48a;outline-offset:-1px"></div>
<div class="t" style="left:102px;top:117px;color:#fff">Index1 (Impact Analysis)</div>
<div class="t" style="left:82px;top:133px">SQL Analyzed</div>

<!-- right panel -->
<div class="a dk" style="left:233px;top:50px;width:638px;height:2px"></div>
<div class="a dk" style="left:233px;top:50px;width:2px;height:530px"></div>
<div class="a hl" style="left:869px;top:50px;width:2px;height:532px"></div>
<div class="a hl" style="left:233px;top:580px;width:637px;height:2px"></div>
<!-- main tabs -->
<div class="a raised" style="left:237px;top:52px;width:59px;height:21px"></div>
<div class="t" style="left:243px;top:56px">Properties</div>
<div class="a dith" style="left:299px;top:52px;width:58px;height:21px;box-shadow:inset -1px -1px #fff,inset 1px 1px #404040,inset 2px 2px #808080"></div>
<div class="t" style="left:307px;top:57px">Prognosis</div>
<div class="a raised" style="left:360px;top:52px;width:83px;height:21px"></div>
<div class="t" style="left:365px;top:56px">Create Indexes</div>
<!-- chart tab control -->
<div class="a" style="left:239px;top:79px;width:626px;height:232px;box-shadow:inset -1px -1px #fff,inset 1px 1px #808080"></div>
<div class="a" style="left:240px;top:80px;width:624px;height:210px;box-shadow:inset -1px -1px #404040,inset 1px 1px #fff,inset -2px -2px #808080"></div>
<div class="a" style="left:244px;top:84px;width:616px;height:204px;box-shadow:inset -1px -1px #fff,inset 1px 1px #808080,inset -2px -2px #d4d0c8,inset 2px 2px #404040"></div>
<div class="a hl" style="left:246px;top:86px;width:612px;height:1px"></div>
<div class="a hl" style="left:246px;top:86px;width:1px;height:183px"></div>
<div class="a dk" style="left:515px;top:87px;width:1px;height:182px"></div>
<div class="a hl" style="left:516px;top:87px;width:1px;height:182px"></div>
<div class="a dk" style="left:765px;top:87px;width:1px;height:182px"></div>
<div class="a hl" style="left:766px;top:87px;width:1px;height:182px"></div>
<!-- chart h-scrollbar -->
<div class="a dk" style="left:246px;top:269px;width:612px;height:1px"></div>
<div class="a dith" style="left:246px;top:270px;width:612px;height:16px"></div>
<div class="a raised" style="left:246px;top:270px;width:16px;height:16px"></div>
<div class="arr" style="left:250px;top:274px;border-right-color:#000;border-left-width:0"></div>
<div class="a raised" style="left:262px;top:270px;width:234px;height:16px"></div>
<div class="a raised" style="left:842px;top:270px;width:16px;height:16px"></div>
<div class="arr" style="left:852px;top:274px;border-left-color:#000;border-right-width:0"></div>

<!-- chart 1 -->
<div class="t" style="left:358px;top:94px">Total Cost</div>
<div class="t" style="left:257px;top:113px;width:55px;text-align:right;letter-spacing:0;font-size:12px">2,000,000</div>
<div class="t" style="left:257px;top:133px;width:55px;text-align:right;letter-spacing:0;font-size:12px">1,500,000</div>
<div class="t" style="left:257px;top:153px;width:55px;text-align:right;letter-spacing:0;font-size:12px">1,000,000</div>
<div class="t" style="left:257px;top:173px;width:55px;text-align:right;letter-spacing:0;font-size:12px">500,000</div>
<div class="t" style="left:257px;top:193px;width:55px;text-align:right;letter-spacing:0;font-size:12px">0</div>
<svg class="a" style="left:246px;top:87px" width="612" height="182" viewBox="246 87 612 182" shape-rendering="crispEdges">
 <!-- ticks -->
 <path d="M315 118.5h3M315 138.5h3M315 158.5h3M315 178.5h3M315 198.5h3M363.5 199v4" stroke="#808080"/><path d="M317 123.5h2M317 127.5h2M317 131.5h2M317 135.5h2M317 143.5h2M317 147.5h2M317 151.5h2M317 155.5h2M317 163.5h2M317 167.5h2M317 171.5h2M317 175.5h2M317 183.5h2M317 187.5h2M317 191.5h2M317 195.5h2" stroke="#a0a0a0"/>
 <!-- back wall border -->
 <rect x="323" y="114" width="186" height="1" fill="#000"/>
 <rect x="323" y="114" width="1" height="81" fill="#000"/>
 <rect x="508" y="114" width="1" height="81" fill="#000"/>
 <rect x="323" y="194" width="186" height="1" fill="#000"/>
 <!-- left wall -->
 <rect x="319" y="117" width="4" height="80" fill="#ffff80"/>
 <rect x="318" y="118" width="1" height="81" fill="#000"/>
 <rect x="319" y="117" width="1" height="1" fill="#000"/><rect x="320" y="116" width="1" height="1" fill="#000"/><rect x="321" y="115" width="1" height="1" fill="#000"/><rect x="322" y="114" width="1" height="1" fill="#000"/>
 <rect x="320" y="116" width="1" height="1" fill="#000"/>
 <rect x="320" y="117" width="3" height="1" fill="#ffff80"/><rect x="321" y="116" width="2" height="1" fill="#ffff80"/><rect x="322" y="115" width="1" height="1" fill="#ffff80"/>
 <!-- floor -->
 <rect x="320" y="195" width="188" height="2" fill="#fff"/>
 <rect x="322" y="194" width="1" height="1" fill="#000"/><rect x="321" y="195" width="1" height="1" fill="#000"/><rect x="320" y="196" width="1" height="1" fill="#000"/>
 <!-- red bar -->
 <polygon points="342,141 346,137 391,137 387,141" fill="#c00000" stroke="#000" stroke-width="0.6" shape-rendering="geometricPrecision"/>
 <polygon points="387,141 391,137 391,194 387,198" fill="#800000" stroke="#000" stroke-width="0.6" shape-rendering="geometricPrecision"/>
 <rect x="342" y="141" width="45" height="56" fill="#f00"/>
 <!-- green bar -->
 <polygon points="439,148 443,144 488,144 484,148" fill="#004000" stroke="#000" stroke-width="0.6" shape-rendering="geometricPrecision"/>
 <polygon points="484,148 488,144 488,194 484,198" fill="#000" shape-rendering="geometricPrecision"/>
 <rect x="439" y="148" width="45" height="49" fill="#008000"/>
 <rect x="318" y="197" width="188" height="2" fill="#000"/>
 <rect x="506" y="196" width="1" height="1" fill="#000"/><rect x="507" y="195" width="1" height="1" fill="#000"/>
 <!-- label connectors -->
 <path d="M364.5 135v4M462.5 142v4" stroke="#fff"/>
 <!-- labels -->
 <rect x="333" y="120" width="67" height="17" fill="#808080"/>
 <rect x="331.5" y="118.5" width="67" height="17" fill="#ffffe1" stroke="#000"/>
 <rect x="430" y="127" width="67" height="17" fill="#808080"/>
 <rect x="428.5" y="125.5" width="67" height="17" fill="#ffffe1" stroke="#000"/>
 <rect x="278.5" y="227.5" width="205" height="33" fill="#fff" stroke="#000"/>
 <!-- chart 2 pie -->
 <ellipse cx="641" cy="166.5" rx="55" ry="30.5" fill="#ff0" stroke="#000" stroke-width="1" shape-rendering="geometricPrecision"/>
 <path d="M641 166.5 L696 166.5 A55 30.5 0 0 0 676.2 143.1 Z" fill="#008000" stroke="#000" stroke-width="1" shape-rendering="geometricPrecision"/>
 <rect x="696" y="136" width="57" height="17" fill="#808080"/>
 <rect x="694.5" y="134.5" width="57" height="17" fill="#ffffe1" stroke="#000"/>
 <rect x="702" y="155" width="33" height="13" fill="#808080"/>
 <rect x="700.5" y="153.5" width="33" height="13" fill="#ffffe1" stroke="#000"/>
 <rect x="532" y="184" width="57" height="17" fill="#808080"/>
 <rect x="530.5" y="182.5" width="57" height="17" fill="#ffffe1" stroke="#000"/>
 <rect x="531.5" y="227.5" width="218" height="33" fill="#fff" stroke="#000"/>
 <rect x="538.5" y="230.5" width="15" height="10" fill="#f00" stroke="#000"/>
 <rect x="644.5" y="230.5" width="15" height="10" fill="#008000" stroke="#000"/>
 <rect x="538.5" y="246.5" width="15" height="11" fill="#ff0" stroke="#000"/>
 <!-- chart 3 partial -->
 <ellipse cx="868" cy="175" rx="32" ry="32" fill="#ff0" stroke="#000" stroke-width="1" shape-rendering="geometricPrecision"/>
 <rect x="782" y="195" width="57" height="17" fill="#808080"/>
 <rect x="780.5" y="193.5" width="57" height="17" fill="#ffffe1" stroke="#000"/>
 <rect x="808.5" y="243.5" width="60" height="17" fill="#fff" stroke="#000"/>
 <rect x="814.5" y="246.5" width="11" height="11" fill="#008000" stroke="#000"/>
</svg>
<div class="t" style="left:338px;top:122px;letter-spacing:0;font-size:12px">1,430,106</div>
<div class="t" style="left:435px;top:129px;letter-spacing:0;font-size:12px">1,262,518</div>
<div class="t" style="left:328px;top:207px;letter-spacing:0;font-size:12px">Original Plan</div>
<div class="t" style="left:288px;top:231px;letter-spacing:0;font-size:12px">1,430,106 Original Plan</div>
<div class="t" style="left:288px;top:247px;letter-spacing:0;font-size:12px">1,262,518 Index1 (Impact Analysis)</div>
<div class="t" style="left:589px;top:94px">SQL with Cost Change</div>
<div class="t" style="left:701px;top:138px;letter-spacing:0;font-size:12px">13.95 %</div>
<div class="t" style="left:708px;top:153px;letter-spacing:0;font-size:12px">0 %</div>
<div class="t" style="left:537px;top:186px;letter-spacing:0;font-size:12px">86.05 %</div>
<div class="t" style="left:566px;top:231px;letter-spacing:0;font-size:12px">0 Degraded</div>
<div class="t" style="left:672px;top:231px;letter-spacing:0;font-size:12px">6 Improved</div>
<div class="t" style="left:559px;top:247px;letter-spacing:0;font-size:12px">37 Unchanged</div>
<div class="a" style="left:766px;top:87px;width:92px;height:182px;overflow:hidden">
 <div class="t" style="left:21px;top:110px;letter-spacing:0;font-size:12px">86.05 %</div>
 <div class="t" style="left:71px;top:159px;letter-spacing:0;font-size:12px">6 Unchanged</div>
</div>

<!-- chart/summary tabs -->
<div class="a" style="left:240px;top:288px;width:46px;height:22px;background:#d4d0c8;box-shadow:inset 1px 0 #fff,inset -1px -1px #404040,inset -2px -2px #808080"></div>
<div class="t" style="left:249px;top:294px">Chart</div>
<div class="a" style="left:286px;top:290px;width:53px;height:18px;background:#d4d0c8;box-shadow:inset 1px 0 #fff,inset -1px -1px #404040,inset -2px -2px #808080"></div>
<div class="t" style="left:290px;top:292px">Summary</div>

<!-- listview -->
<div class="a" style="left:239px;top:314px;width:626px;height:94px;background:#fff;box-shadow:inset -1px -1px #fff,inset 1px 1px #808080,inset -2px -2px #d4d0c8,inset 2px 2px #404040"></div>
<div class="a" style="left:241px;top:316px;width:606px;height:74px;overflow:hidden">
 <div class="a" style="left:0;top:0;width:250px;height:17px;background:#d4d0c8;box-shadow:inset -1px -1px #404040,inset 1px 1px #fff,inset -2px -2px #808080"></div>
 <div class="a" style="left:250px;top:0;width:100px;height:17px;background:#d4d0c8;box-shadow:inset -1px -1px #404040,inset 1px 1px #fff,inset -2px -2px #808080"></div>
 <div class="a" style="left:350px;top:0;width:100px;height:17px;background:#d4d0c8;box-shadow:inset -1px -1px #404040,inset 1px 1px #fff,inset -2px -2px #808080"></div>
 <div class="a" style="left:450px;top:0;width:100px;height:17px;background:#d4d0c8;box-shadow:inset -1px -1px #404040,inset 1px 1px #fff,inset -2px -2px #808080"></div>
 <div class="a" style="left:550px;top:0;width:100px;height:17px;background:#d4d0c8;box-shadow:inset -1px -1px #404040,inset 1px 1px #fff,inset -2px -2px #808080"></div>
 <div class="t" style="left:7px;top:2px">SQL</div>
 <div class="t" style="left:257px;top:2px">Master Cost</div>
 <div class="t" style="left:357px;top:2px">Scenario Cost</div>
 <div class="t" style="left:457px;top:2px">Cost Difference</div>
 <div class="t" style="left:557px;top:2px">Plan Changed</div>
 <div class="a" style="left:18px;top:17px;width:620px;height:18px;background:#d4d0c8"></div>
 <div class="a" style="left:0;top:35px;width:620px;height:1px;background:#d4d0c8"></div>
 <div class="a" style="left:0;top:52px;width:620px;height:1px;background:#d4d0c8"></div>
 <div class="a" style="left:0;top:69px;width:620px;height:1px;background:#d4d0c8"></div>
 <div class="a" style="left:250px;top:17px;width:1px;height:60px;background:#d4d0c8"></div>
 <div class="a" style="left:350px;top:17px;width:1px;height:60px;background:#d4d0c8"></div>
 <div class="a" style="left:450px;top:17px;width:1px;height:60px;background:#d4d0c8"></div>
 <div class="a" style="left:550px;top:17px;width:1px;height:60px;background:#d4d0c8"></div>
 <div class="t" style="left:20px;top:22px;letter-spacing:-0.05px">SQL\SQL Select\[sqlexp] [sqlexp] stored proc...</div>
 <div class="t" style="left:20px;top:39px;letter-spacing:-0.05px">SQL\SQL Select\[sqlexp] [sqlexp] stored proc...</div>
 <div class="t" style="left:20px;top:56px;letter-spacing:-0.05px">SQL\SQL Select\[sqlexp] [sqlexp] stored proc...</div>
 <div class="t" style="left:257px;top:22px">116402</div><div class="t" style="left:257px;top:39px">132992</div><div class="t" style="left:257px;top:56px">116402</div>
 <div class="t" style="left:357px;top:22px">116402</div><div class="t" style="left:357px;top:39px">97011</div><div class="t" style="left:357px;top:56px">116402</div>
 <div class="t" style="left:457px;top:22px">0</div><div class="t" style="left:457px;top:39px">-35981</div><div class="t" style="left:457px;top:56px">0</div>
 <div class="t" style="left:557px;top:22px">No</div><div class="t" style="left:557px;top:39px">Yes</div><div class="t" style="left:557px;top:56px">No</div>
</div>
<!-- list v-scroll -->
<div class="a dith" style="left:847px;top:316px;width:16px;height:74px"></div>
<div class="a raised" style="left:847px;top:316px;width:16px;height:16px"></div>
<div class="arr" style="left:851px;top:321px;border-bottom-color:#000;border-top-width:0"></div>
<div class="a raised" style="left:847px;top:332px;width:16px;height:8px"></div>
<div class="a raised" style="left:847px;top:374px;width:16px;height:16px"></div>
<div class="arr" style="left:851px;top:380px;border-top-color:#000;border-bottom-width:0"></div>
<!-- list h-scroll -->
<div class="a dith" style="left:241px;top:390px;width:606px;height:16px"></div>
<div class="a raised" style="left:241px;top:390px;width:16px;height:16px"></div>
<div class="arr" style="left:245px;top:394px;border-right-color:#000;border-left-width:0"></div>
<div class="a raised" style="left:257px;top:390px;width:331px;height:16px"></div>
<div class="a raised" style="left:831px;top:390px;width:16px;height:16px"></div>
<div class="arr" style="left:837px;top:394px;border-left-color:#000;border-right-width:0"></div>
<div class="a" style="left:847px;top:390px;width:16px;height:16px;background:#d4d0c8"></div>

<!-- lower tab control -->
<div class="a" style="left:239px;top:411px;width:626px;height:165px;box-shadow:inset -1px -1px #fff,inset 1px 1px #808080"></div>
<div class="a" style="left:240px;top:412px;width:624px;height:142px;box-shadow:inset -1px -1px #404040,inset 1px 1px #fff,inset -2px -2px #808080"></div>

<div class="a" style="left:244px;top:417px;width:231px;height:135px"></div>

<div class="a" style="left:244px;top:417px;width:232px;height:135px;box-shadow:inset -1px -1px #fff,inset 1px 1px #808080,inset 2px 2px #fff"></div>
<div class="a dk" style="left:245px;top:432px;width:230px;height:1px"></div>
<div class="a dd" style="left:245px;top:433px;width:230px;height:1px"></div>
<div class="t" style="left:252px;top:420px;font-weight:bold;font-size:12px;letter-spacing:-0.1px">Original Plan</div>
<div class="a dith" style="left:248px;top:434px;width:21px;height:22px;box-shadow:inset -1px -1px #fff,inset 1px 1px #404040"></div>
<svg class="a" style="left:250px;top:437px" width="16" height="16" shape-rendering="crispEdges"><rect x="1" y="0" width="4" height="1" fill="#0f0"/><rect x="0" y="1" width="4" height="1" fill="#ff0"/><rect x="4" y="1" width="1" height="1" fill="#0f0"/><rect x="0" y="2" width="4" height="1" fill="#ff0"/><rect x="4" y="2" width="1" height="1" fill="#0f0"/><rect x="0" y="3" width="4" height="1" fill="#ff0"/><rect x="4" y="3" width="1" height="1" fill="#0f0"/><rect x="6" y="3" width="2" height="1" fill="#000"/><rect x="9" y="3" width="3" height="1" fill="#000"/><rect x="1" y="4" width="1" height="1" fill="#000"/><rect x="1" y="5" width="1" height="1" fill="#000"/><rect x="5" y="5" width="4" height="1" fill="#0f0"/><rect x="1" y="6" width="1" height="1" fill="#000"/><rect x="4" y="6" width="4" height="1" fill="#ff0"/><rect x="8" y="6" width="1" height="1" fill="#0f0"/><rect x="1" y="7" width="3" height="1" fill="#000"/><rect x="4" y="7" width="4" height="1" fill="#ff0"/><rect x="8" y="7" width="1" height="1" fill="#0f0"/><rect x="1" y="8" width="1" height="1" fill="#000"/><rect x="4" y="8" width="4" height="1" fill="#ff0"/><rect x="8" y="8" width="1" height="1" fill="#0f0"/><rect x="10" y="8" width="3" height="1" fill="#000"/><rect x="14" y="8" width="2" height="1" fill="#000"/><rect x="1" y="9" width="1" height="1" fill="#000"/><rect x="5" y="9" width="1" height="1" fill="#000"/><rect x="1" y="10" width="1" height="1" fill="#000"/><rect x="5" y="10" width="1" height="1" fill="#000"/><rect x="9" y="10" width="4" height="1" fill="#0f0"/><rect x="1" y="11" width="1" height="1" fill="#000"/><rect x="5" y="11" width="1" height="1" fill="#000"/><rect x="8" y="11" width="4" height="1" fill="#ff0"/><rect x="12" y="11" width="1" height="1" fill="#0f0"/><rect x="1" y="12" width="1" height="1" fill="#000"/><rect x="5" y="12" width="3" height="1" fill="#000"/><rect x="8" y="12" width="4" height="1" fill="#ff0"/><rect x="12" y="12" width="1" height="1" fill="#0f0"/><rect x="1" y="13" width="1" height="1" fill="#000"/><rect x="8" y="13" width="4" height="1" fill="#ff0"/><rect x="12" y="13" width="1" height="1" fill="#0f0"/><rect x="14" y="13" width="2" height="1" fill="#000"/><rect x="1" y="14" width="1" height="1" fill="#000"/><rect x="1" y="15" width="1" height="1" fill="#000"/></svg>
<div class="a dk" style="left:273px;top:435px;width:1px;height:20px"></div><div class="a hl" style="left:274px;top:435px;width:1px;height:20px"></div>
<div class="a dk" style="left:305px;top:435px;width:1px;height:20px"></div><div class="a hl" style="left:306px;top:435px;width:1px;height:20px"></div>
<div class="a dk" style="left:337px;top:435px;width:1px;height:20px"></div><div class="a hl" style="left:338px;top:435px;width:1px;height:20px"></div>
<div class="a dk" style="left:369px;top:435px;width:1px;height:20px"></div><div class="a hl" style="left:370px;top:435px;width:1px;height:20px"></div>
<div class="a dk" style="left:401px;top:435px;width:1px;height:20px"></div><div class="a hl" style="left:402px;top:435px;width:1px;height:20px"></div>
<svg class="a" style="left:281px;top:435px" width="17" height="17">
<circle cx="8.5" cy="8.5" r="7.5" fill="none" stroke="#808080"/>
<circle cx="8.5" cy="8.5" r="5" fill="none" stroke="#808080"/>
<g shape-rendering="crispEdges" fill="#808080"><rect x="4" y="6" width="1" height="6"/><rect x="5" y="4" width="1" height="2"/><rect x="6" y="4" width="1" height="8"/><rect x="5" y="8" width="1" height="1"/>
<rect x="9" y="4" width="1" height="8"/><rect x="10" y="4" width="2" height="1"/><rect x="12" y="5" width="1" height="2"/><rect x="10" y="7" width="2" height="1"/></g>
<rect x="10" y="5" width="2" height="2" fill="#fff" opacity="0"/></svg><svg class="a" style="left:312px;top:436px" width="16" height="16" shape-rendering="crispEdges"><rect x="1" y="0" width="2" height="1" fill="#808080"/><rect x="1" y="1" width="1" height="1" fill="#fff"/><rect x="2" y="1" width="1" height="1" fill="#c0c0c0"/><rect x="3" y="1" width="1" height="1" fill="#808080"/><rect x="1" y="2" width="1" height="1" fill="#c0c0c0"/><rect x="2" y="2" width="1" height="1" fill="#fff"/><rect x="3" y="2" width="1" height="1" fill="#c0c0c0"/><rect x="4" y="2" width="1" height="1" fill="#808080"/><rect x="1" y="3" width="1" height="1" fill="#808080"/><rect x="2" y="3" width="1" height="1" fill="#c0c0c0"/><rect x="3" y="3" width="1" height="1" fill="#fff"/><rect x="4" y="3" width="1" height="1" fill="#c0c0c0"/><rect x="5" y="3" width="1" height="1" fill="#808080"/><rect x="2" y="4" width="1" height="1" fill="#808080"/><rect x="3" y="4" width="1" height="1" fill="#c0c0c0"/><rect x="4" y="4" width="1" height="1" fill="#fff"/><rect x="5" y="4" width="1" height="1" fill="#c0c0c0"/><rect x="6" y="4" width="1" height="1" fill="#808080"/><rect x="3" y="5" width="1" height="1" fill="#808080"/><rect x="4" y="5" width="1" height="1" fill="#c0c0c0"/><rect x="5" y="5" width="1" height="1" fill="#fff"/><rect x="6" y="5" width="1" height="1" fill="#c0c0c0"/><rect x="7" y="5" width="1" height="1" fill="#808080"/><rect x="4" y="6" width="1" height="1" fill="#808080"/><rect x="5" y="6" width="1" height="1" fill="#c0c0c0"/><rect x="6" y="6" width="1" height="1" fill="#fff"/><rect x="7" y="6" width="1" height="1" fill="#c0c0c0"/><rect x="8" y="6" width="1" height="1" fill="#808080"/><rect x="5" y="7" width="1" height="1" fill="#808080"/><rect x="6" y="7" width="2" height="1" fill="#c0c0c0"/><rect x="8" y="7" width="1" height="1" fill="#808080"/><rect x="6" y="8" width="2" height="1" fill="#808080"/><rect x="9" y="9" width="6" height="1" fill="#808080"/><rect x="2" y="10" width="6" height="1" fill="#808080"/><rect x="9" y="10" width="6" height="1" fill="#808080"/><rect x="2" y="11" width="6" height="1" fill="#808080"/><rect x="11" y="11" width="2" height="1" fill="#808080"/><rect x="13" y="11" width="1" height="1" fill="#fff"/><rect x="4" y="12" width="2" height="1" fill="#808080"/><rect x="6" y="12" width="1" height="1" fill="#fff"/><rect x="11" y="12" width="2" height="1" fill="#808080"/><rect x="13" y="12" width="1" height="1" fill="#fff"/><rect x="4" y="13" width="2" height="1" fill="#808080"/><rect x="6" y="13" width="1" height="1" fill="#fff"/><rect x="11" y="13" width="2" height="1" fill="#808080"/><rect x="13" y="13" width="1" height="1" fill="#fff"/><rect x="4" y="14" width="2" height="1" fill="#808080"/><rect x="6" y="14" width="1" height="1" fill="#fff"/><rect x="11" y="14" width="2" height="1" fill="#808080"/><rect x="13" y="14" width="1" height="1" fill="#fff"/><rect x="4" y="15" width="2" height="1" fill="#808080"/><rect x="6" y="15" width="1" height="1" fill="#fff"/></svg><svg class="a" style="left:344px;top:436px" width="18" height="16" shape-rendering="crispEdges"><rect x="2" y="0" width="1" height="1" fill="#000"/><rect x="4" y="0" width="1" height="1" fill="#000"/><rect x="6" y="0" width="1" height="1" fill="#000"/><rect x="8" y="0" width="1" height="1" fill="#000"/><rect x="10" y="0" width="1" height="1" fill="#000"/><rect x="12" y="0" width="2" height="1" fill="#000"/><rect x="1" y="1" width="12" height="1" fill="#000"/><rect x="13" y="1" width="2" height="1" fill="#fff"/><rect x="15" y="1" width="1" height="1" fill="#000"/><rect x="1" y="2" width="1" height="1" fill="#000"/><rect x="2" y="2" width="1" height="1" fill="#fff"/><rect x="3" y="2" width="1" height="1" fill="#000"/><rect x="4" y="2" width="1" height="1" fill="#fff"/><rect x="5" y="2" width="1" height="1" fill="#000"/><rect x="6" y="2" width="1" height="1" fill="#fff"/><rect x="7" y="2" width="1" height="1" fill="#000"/><rect x="8" y="2" width="1" height="1" fill="#fff"/><rect x="9" y="2" width="1" height="1" fill="#000"/><rect x="10" y="2" width="1" height="1" fill="#fff"/><rect x="11" y="2" width="2" height="1" fill="#000"/><rect x="13" y="2" width="2" height="1" fill="#fff"/><rect x="15" y="2" width="2" height="1" fill="#000"/><rect x="1" y="3" width="1" height="1" fill="#000"/><rect x="2" y="3" width="10" height="1" fill="#fff"/><rect x="12" y="3" width="2" height="1" fill="#000"/><rect x="14" y="3" width="1" height="1" fill="#fff"/><rect x="15" y="3" width="2" height="1" fill="#000"/><rect x="1" y="4" width="1" height="1" fill="#000"/><rect x="2" y="4" width="10" height="1" fill="#fff"/><rect x="12" y="4" width="1" height="1" fill="#000"/><rect x="13" y="4" width="1" height="1" fill="#fff"/><rect x="14" y="4" width="1" height="1" fill="#000"/><rect x="15" y="4" width="1" height="1" fill="#fff"/><rect x="16" y="4" width="1" height="1" fill="#000"/><rect x="1" y="5" width="1" height="1" fill="#000"/><rect x="2" y="5" width="1" height="1" fill="#fff"/><rect x="3" y="5" width="2" height="1" fill="#808080"/><rect x="5" y="5" width="1" height="1" fill="#fff"/><rect x="6" y="5" width="2" height="1" fill="#808080"/><rect x="8" y="5" width="4" height="1" fill="#fff"/><rect x="12" y="5" width="1" height="1" fill="#000"/><rect x="13" y="5" width="1" height="1" fill="#fff"/><rect x="14" y="5" width="1" height="1" fill="#000"/><rect x="15" y="5" width="1" height="1" fill="#fff"/><rect x="16" y="5" width="1" height="1" fill="#000"/><rect x="1" y="6" width="1" height="1" fill="#000"/><rect x="2" y="6" width="10" height="1" fill="#fff"/><rect x="12" y="6" width="1" height="1" fill="#000"/><rect x="13" y="6" width="1" height="1" fill="#fff"/><rect x="14" y="6" width="1" height="1" fill="#000"/><rect x="15" y="6" width="1" height="1" fill="#fff"/><rect x="16" y="6" width="1" height="1" fill="#000"/><rect x="1" y="7" width="1" height="1" fill="#000"/><rect x="2" y="7" width="1" height="1" fill="#fff"/><rect x="3" y="7" width="2" height="1" fill="#808080"/><rect x="5" y="7" width="1" height="1" fill="#fff"/><rect x="6" y="7" width="2" height="1" fill="#808080"/><rect x="8" y="7" width="1" height="1" fill="#fff"/><rect x="9" y="7" width="1" height="1" fill="#808080"/><rect x="10" y="7" width="2" height="1" fill="#fff"/><rect x="12" y="7" width="1" height="1" fill="#000"/><rect x="13" y="7" width="1" height="1" fill="#fff"/><rect x="14" y="7" width="1" height="1" fill="#000"/><rect x="15" y="7" width="1" height="1" fill="#fff"/><rect x="16" y="7" width="1" height="1" fill="#000"/><rect x="1" y="8" width="1" height="1" fill="#000"/><rect x="2" y="8" width="10" height="1" fill="#fff"/><rect x="12" y="8" width="1" height="1" fill="#000"/><rect x="13" y="8" width="1" height="1" fill="#fff"/><rect x="14" y="8" width="1" height="1" fill="#000"/><rect x="15" y="8" width="1" height="1" fill="#fff"/><rect x="16" y="8" width="1" height="1" fill="#000"/><rect x="1" y="9" width="1" height="1" fill="#000"/><rect x="2" y="9" width="10" height="1" fill="#fff"/><rect x="12" y="9" width="1" height="1" fill="#000"/><rect x="13" y="9" width="1" height="1" fill="#fff"/><rect x="14" y="9" width="1" height="1" fill="#000"/><rect x="15" y="9" width="1" height="1" fill="#fff"/><rect x="16" y="9" width="1" height="1" fill="#000"/><rect x="1" y="10" width="1" height="1" fill="#000"/><rect x="2" y="10" width="10" height="1" fill="#fff"/><rect x="12" y="10" width="1" height="1" fill="#000"/><rect x="13" y="10" width="1" height="1" fill="#fff"/><rect x="14" y="10" width="1" height="1" fill="#000"/><rect x="15" y="10" width="1" height="1" fill="#fff"/><rect x="16" y="10" width="1" height="1" fill="#000"/><rect x="1" y="11" width="1" height="1" fill="#000"/><rect x="2" y="11" width="4" height="1" fill="#f00"/><rect x="6" y="11" width="7" height="1" fill="#000"/><rect x="13" y="11" width="1" height="1" fill="#fff"/><rect x="14" y="11" width="1" height="1" fill="#000"/><rect x="15" y="11" width="1" height="1" fill="#fff"/><rect x="16" y="11" width="1" height="1" fill="#000"/><rect x="1" y="12" width="1" height="1" fill="#000"/><rect x="2" y="12" width="4" height="1" fill="#f00"/><rect x="6" y="12" width="9" height="1" fill="#000"/><rect x="15" y="12" width="1" height="1" fill="#fff"/><rect x="16" y="12" width="1" height="1" fill="#000"/><rect x="2" y="13" width="3" height="1" fill="#000"/><rect x="6" y="13" width="4" height="1" fill="#0ff"/><rect x="10" y="13" width="5" height="1" fill="#000"/><rect x="15" y="13" width="1" height="1" fill="#fff"/><rect x="16" y="13" width="1" height="1" fill="#000"/><rect x="7" y="14" width="4" height="1" fill="#000"/><rect x="12" y="14" width="4" height="1" fill="#ff0"/><rect x="16" y="14" width="1" height="1" fill="#000"/><rect x="12" y="15" width="4" height="1" fill="#000"/></svg><svg class="a" style="left:379px;top:438px" width="12" height="12" shape-rendering="crispEdges"><rect x="3" y="0" width="6" height="1" fill="#808080"/><rect x="2" y="1" width="1" height="1" fill="#808080"/><rect x="9" y="1" width="1" height="1" fill="#808080"/><rect x="1" y="2" width="1" height="1" fill="#808080"/><rect x="10" y="2" width="1" height="1" fill="#808080"/><rect x="0" y="3" width="1" height="1" fill="#808080"/><rect x="3" y="3" width="6" height="1" fill="#808080"/><rect x="11" y="3" width="1" height="1" fill="#808080"/><rect x="0" y="4" width="1" height="1" fill="#808080"/><rect x="3" y="4" width="6" height="1" fill="#808080"/><rect x="11" y="4" width="1" height="1" fill="#808080"/><rect x="0" y="5" width="1" height="1" fill="#808080"/><rect x="5" y="5" width="2" height="1" fill="#808080"/><rect x="7" y="5" width="1" height="1" fill="#fff"/><rect x="11" y="5" width="1" height="1" fill="#808080"/><rect x="0" y="6" width="1" height="1" fill="#808080"/><rect x="5" y="6" width="2" height="1" fill="#808080"/><rect x="7" y="6" width="1" height="1" fill="#fff"/><rect x="11" y="6" width="1" height="1" fill="#808080"/><rect x="0" y="7" width="1" height="1" fill="#808080"/><rect x="5" y="7" width="2" height="1" fill="#808080"/><rect x="7" y="7" width="1" height="1" fill="#fff"/><rect x="11" y="7" width="1" height="1" fill="#808080"/><rect x="0" y="8" width="1" height="1" fill="#808080"/><rect x="5" y="8" width="2" height="1" fill="#808080"/><rect x="7" y="8" width="1" height="1" fill="#fff"/><rect x="11" y="8" width="1" height="1" fill="#808080"/><rect x="1" y="9" width="1" height="1" fill="#808080"/><rect x="10" y="9" width="1" height="1" fill="#808080"/><rect x="2" y="10" width="1" height="1" fill="#808080"/><rect x="9" y="10" width="1" height="1" fill="#808080"/><rect x="3" y="11" width="6" height="1" fill="#808080"/></svg>

<div class="a" style="left:478px;top:417px;width:383px;height:135px;box-shadow:inset -1px -1px #fff,inset 1px 1px #808080,inset 2px 2px #fff"></div>
<div class="a dk" style="left:479px;top:432px;width:381px;height:1px"></div>
<div class="a dd" style="left:479px;top:433px;width:381px;height:1px"></div>
<div class="t" style="left:486px;top:420px;font-weight:bold;font-size:12px;letter-spacing:-0.1px">Scenario</div>
<div class="a dith" style="left:482px;top:434px;width:21px;height:22px;box-shadow:inset -1px -1px #fff,inset 1px 1px #404040"></div>
<svg class="a" style="left:484px;top:437px" width="16" height="16" shape-rendering="crispEdges"><rect x="1" y="0" width="4" height="1" fill="#0f0"/><rect x="0" y="1" width="4" height="1" fill="#ff0"/><rect x="4" y="1" width="1" height="1" fill="#0f0"/><rect x="0" y="2" width="4" height="1" fill="#ff0"/><rect x="4" y="2" width="1" height="1" fill="#0f0"/><rect x="0" y="3" width="4" height="1" fill="#ff0"/><rect x="4" y="3" width="1" height="1" fill="#0f0"/><rect x="6" y="3" width="2" height="1" fill="#000"/><rect x="9" y="3" width="3" height="1" fill="#000"/><rect x="1" y="4" width="1" height="1" fill="#000"/><rect x="1" y="5" width="1" height="1" fill="#000"/><rect x="5" y="5" width="4" height="1" fill="#0f0"/><rect x="1" y="6" width="1" height="1" fill="#000"/><rect x="4" y="6" width="4" height="1" fill="#ff0"/><rect x="8" y="6" width="1" height="1" fill="#0f0"/><rect x="1" y="7" width="3" height="1" fill="#000"/><rect x="4" y="7" width="4" height="1" fill="#ff0"/><rect x="8" y="7" width="1" height="1" fill="#0f0"/><rect x="1" y="8" width="1" height="1" fill="#000"/><rect x="4" y="8" width="4" height="1" fill="#ff0"/><rect x="8" y="8" width="1" height="1" fill="#0f0"/><rect x="10" y="8" width="3" height="1" fill="#000"/><rect x="14" y="8" width="2" height="1" fill="#000"/><rect x="1" y="9" width="1" height="1" fill="#000"/><rect x="5" y="9" width="1" height="1" fill="#000"/><rect x="1" y="10" width="1" height="1" fill="#000"/><rect x="5" y="10" width="1" height="1" fill="#000"/><rect x="9" y="10" width="4" height="1" fill="#0f0"/><rect x="1" y="11" width="1" height="1" fill="#000"/><rect x="5" y="11" width="1" height="1" fill="#000"/><rect x="8" y="11" width="4" height="1" fill="#ff0"/><rect x="12" y="11" width="1" height="1" fill="#0f0"/><rect x="1" y="12" width="1" height="1" fill="#000"/><rect x="5" y="12" width="3" height="1" fill="#000"/><rect x="8" y="12" width="4" height="1" fill="#ff0"/><rect x="12" y="12" width="1" height="1" fill="#0f0"/><rect x="1" y="13" width="1" height="1" fill="#000"/><rect x="8" y="13" width="4" height="1" fill="#ff0"/><rect x="12" y="13" width="1" height="1" fill="#0f0"/><rect x="14" y="13" width="2" height="1" fill="#000"/><rect x="1" y="14" width="1" height="1" fill="#000"/><rect x="1" y="15" width="1" height="1" fill="#000"/></svg>
<div class="a dk" style="left:507px;top:435px;width:1px;height:20px"></div><div class="a hl" style="left:508px;top:435px;width:1px;height:20px"></div>
<div class="a dk" style="left:539px;top:435px;width:1px;height:20px"></div><div class="a hl" style="left:540px;top:435px;width:1px;height:20px"></div>
<div class="a dk" style="left:571px;top:435px;width:1px;height:20px"></div><div class="a hl" style="left:572px;top:435px;width:1px;height:20px"></div>
<div class="a dk" style="left:603px;top:435px;width:1px;height:20px"></div><div class="a hl" style="left:604px;top:435px;width:1px;height:20px"></div>
<div class="a dk" style="left:635px;top:435px;width:1px;height:20px"></div><div class="a hl" style="left:636px;top:435px;width:1px;height:20px"></div>
<svg class="a" style="left:515px;top:435px" width="17" height="17">
<circle cx="8.5" cy="8.5" r="7.5" fill="none" stroke="#808080"/>
<circle cx="8.5" cy="8.5" r="5" fill="none" stroke="#808080"/>
<g shape-rendering="crispEdges" fill="#808080"><rect x="4" y="6" width="1" height="6"/><rect x="5" y="4" width="1" height="2"/><rect x="6" y="4" width="1" height="8"/><rect x="5" y="8" width="1" height="1"/>
<rect x="9" y="4" width="1" height="8"/><rect x="10" y="4" width="2" height="1"/><rect x="12" y="5" width="1" height="2"/><rect x="10" y="7" width="2" height="1"/></g>
<rect x="10" y="5" width="2" height="2" fill="#fff" opacity="0"/></svg><svg class="a" style="left:546px;top:436px" width="16" height="16" shape-rendering="crispEdges"><rect x="1" y="0" width="2" height="1" fill="#808080"/><rect x="1" y="1" width="1" height="1" fill="#fff"/><rect x="2" y="1" width="1" height="1" fill="#c0c0c0"/><rect x="3" y="1" width="1" height="1" fill="#808080"/><rect x="1" y="2" width="1" height="1" fill="#c0c0c0"/><rect x="2" y="2" width="1" height="1" fill="#fff"/><rect x="3" y="2" width="1" height="1" fill="#c0c0c0"/><rect x="4" y="2" width="1" height="1" fill="#808080"/><rect x="1" y="3" width="1" height="1" fill="#808080"/><rect x="2" y="3" width="1" height="1" fill="#c0c0c0"/><rect x="3" y="3" width="1" height="1" fill="#fff"/><rect x="4" y="3" width="1" height="1" fill="#c0c0c0"/><rect x="5" y="3" width="1" height="1" fill="#808080"/><rect x="2" y="4" width="1" height="1" fill="#808080"/><rect x="3" y="4" width="1" height="1" fill="#c0c0c0"/><rect x="4" y="4" width="1" height="1" fill="#fff"/><rect x="5" y="4" width="1" height="1" fill="#c0c0c0"/><rect x="6" y="4" width="1" height="1" fill="#808080"/><rect x="3" y="5" width="1" height="1" fill="#808080"/><rect x="4" y="5" width="1" height="1" fill="#c0c0c0"/><rect x="5" y="5" width="1" height="1" fill="#fff"/><rect x="6" y="5" width="1" height="1" fill="#c0c0c0"/><rect x="7" y="5" width="1" height="1" fill="#808080"/><rect x="4" y="6" width="1" height="1" fill="#808080"/><rect x="5" y="6" width="1" height="1" fill="#c0c0c0"/><rect x="6" y="6" width="1" height="1" fill="#fff"/><rect x="7" y="6" width="1" height="1" fill="#c0c0c0"/><rect x="8" y="6" width="1" height="1" fill="#808080"/><rect x="5" y="7" width="1" height="1" fill="#808080"/><rect x="6" y="7" width="2" height="1" fill="#c0c0c0"/><rect x="8" y="7" width="1" height="1" fill="#808080"/><rect x="6" y="8" width="2" height="1" fill="#808080"/><rect x="9" y="9" width="6" height="1" fill="#808080"/><rect x="2" y="10" width="6" height="1" fill="#808080"/><rect x="9" y="10" width="6" height="1" fill="#808080"/><rect x="2" y="11" width="6" height="1" fill="#808080"/><rect x="11" y="11" width="2" height="1" fill="#808080"/><rect x="13" y="11" width="1" height="1" fill="#fff"/><rect x="4" y="12" width="2" height="1" fill="#808080"/><rect x="6" y="12" width="1" height="1" fill="#fff"/><rect x="11" y="12" width="2" height="1" fill="#808080"/><rect x="13" y="12" width="1" height="1" fill="#fff"/><rect x="4" y="13" width="2" height="1" fill="#808080"/><rect x="6" y="13" width="1" height="1" fill="#fff"/><rect x="11" y="13" width="2" height="1" fill="#808080"/><rect x="13" y="13" width="1" height="1" fill="#fff"/><rect x="4" y="14" width="2" height="1" fill="#808080"/><rect x="6" y="14" width="1" height="1" fill="#fff"/><rect x="11" y="14" width="2" height="1" fill="#808080"/><rect x="13" y="14" width="1" height="1" fill="#fff"/><rect x="4" y="15" width="2" height="1" fill="#808080"/><rect x="6" y="15" width="1" height="1" fill="#fff"/></svg><svg class="a" style="left:578px;top:436px" width="18" height="16" shape-rendering="crispEdges"><rect x="2" y="0" width="1" height="1" fill="#000"/><rect x="4" y="0" width="1" height="1" fill="#000"/><rect x="6" y="0" width="1" height="1" fill="#000"/><rect x="8" y="0" width="1" height="1" fill="#000"/><rect x="10" y="0" width="1" height="1" fill="#000"/><rect x="12" y="0" width="2" height="1" fill="#000"/><rect x="1" y="1" width="12" height="1" fill="#000"/><rect x="13" y="1" width="2" height="1" fill="#fff"/><rect x="15" y="1" width="1" height="1" fill="#000"/><rect x="1" y="2" width="1" height="1" fill="#000"/><rect x="2" y="2" width="1" height="1" fill="#fff"/><rect x="3" y="2" width="1" height="1" fill="#000"/><rect x="4" y="2" width="1" height="1" fill="#fff"/><rect x="5" y="2" width="1" height="1" fill="#000"/><rect x="6" y="2" width="1" height="1" fill="#fff"/><rect x="7" y="2" width="1" height="1" fill="#000"/><rect x="8" y="2" width="1" height="1" fill="#fff"/><rect x="9" y="2" width="1" height="1" fill="#000"/><rect x="10" y="2" width="1" height="1" fill="#fff"/><rect x="11" y="2" width="2" height="1" fill="#000"/><rect x="13" y="2" width="2" height="1" fill="#fff"/><rect x="15" y="2" width="2" height="1" fill="#000"/><rect x="1" y="3" width="1" height="1" fill="#000"/><rect x="2" y="3" width="10" height="1" fill="#fff"/><rect x="12" y="3" width="2" height="1" fill="#000"/><rect x="14" y="3" width="1" height="1" fill="#fff"/><rect x="15" y="3" width="2" height="1" fill="#000"/><rect x="1" y="4" width="1" height="1" fill="#000"/><rect x="2" y="4" width="10" height="1" fill="#fff"/><rect x="12" y="4" width="1" height="1" fill="#000"/><rect x="13" y="4" width="1" height="1" fill="#fff"/><rect x="14" y="4" width="1" height="1" fill="#000"/><rect x="15" y="4" width="1" height="1" fill="#fff"/><rect x="16" y="4" width="1" height="1" fill="#000"/><rect x="1" y="5" width="1" height="1" fill="#000"/><rect x="2" y="5" width="1" height="1" fill="#fff"/><rect x="3" y="5" width="2" height="1" fill="#808080"/><rect x="5" y="5" width="1" height="1" fill="#fff"/><rect x="6" y="5" width="2" height="1" fill="#808080"/><rect x="8" y="5" width="4" height="1" fill="#fff"/><rect x="12" y="5" width="1" height="1" fill="#000"/><rect x="13" y="5" width="1" height="1" fill="#fff"/><rect x="14" y="5" width="1" height="1" fill="#000"/><rect x="15" y="5" width="1" height="1" fill="#fff"/><rect x="16" y="5" width="1" height="1" fill="#000"/><rect x="1" y="6" width="1" height="1" fill="#000"/><rect x="2" y="6" width="10" height="1" fill="#fff"/><rect x="12" y="6" width="1" height="1" fill="#000"/><rect x="13" y="6" width="1" height="1" fill="#fff"/><rect x="14" y="6" width="1" height="1" fill="#000"/><rect x="15" y="6" width="1" height="1" fill="#fff"/><rect x="16" y="6" width="1" height="1" fill="#000"/><rect x="1" y="7" width="1" height="1" fill="#000"/><rect x="2" y="7" width="1" height="1" fill="#fff"/><rect x="3" y="7" width="2" height="1" fill="#808080"/><rect x="5" y="7" width="1" height="1" fill="#fff"/><rect x="6" y="7" width="2" height="1" fill="#808080"/><rect x="8" y="7" width="1" height="1" fill="#fff"/><rect x="9" y="7" width="1" height="1" fill="#808080"/><rect x="10" y="7" width="2" height="1" fill="#fff"/><rect x="12" y="7" width="1" height="1" fill="#000"/><rect x="13" y="7" width="1" height="1" fill="#fff"/><rect x="14" y="7" width="1" height="1" fill="#000"/><rect x="15" y="7" width="1" height="1" fill="#fff"/><rect x="16" y="7" width="1" height="1" fill="#000"/><rect x="1" y="8" width="1" height="1" fill="#000"/><rect x="2" y="8" width="10" height="1" fill="#fff"/><rect x="12" y="8" width="1" height="1" fill="#000"/><rect x="13" y="8" width="1" height="1" fill="#fff"/><rect x="14" y="8" width="1" height="1" fill="#000"/><rect x="15" y="8" width="1" height="1" fill="#fff"/><rect x="16" y="8" width="1" height="1" fill="#000"/><rect x="1" y="9" width="1" height="1" fill="#000"/><rect x="2" y="9" width="10" height="1" fill="#fff"/><rect x="12" y="9" width="1" height="1" fill="#000"/><rect x="13" y="9" width="1" height="1" fill="#fff"/><rect x="14" y="9" width="1" height="1" fill="#000"/><rect x="15" y="9" width="1" height="1" fill="#fff"/><rect x="16" y="9" width="1" height="1" fill="#000"/><rect x="1" y="10" width="1" height="1" fill="#000"/><rect x="2" y="10" width="10" height="1" fill="#fff"/><rect x="12" y="10" width="1" height="1" fill="#000"/><rect x="13" y="10" width="1" height="1" fill="#fff"/><rect x="14" y="10" width="1" height="1" fill="#000"/><rect x="15" y="10" width="1" height="1" fill="#fff"/><rect x="16" y="10" width="1" height="1" fill="#000"/><rect x="1" y="11" width="1" height="1" fill="#000"/><rect x="2" y="11" width="4" height="1" fill="#f00"/><rect x="6" y="11" width="7" height="1" fill="#000"/><rect x="13" y="11" width="1" height="1" fill="#fff"/><rect x="14" y="11" width="1" height="1" fill="#000"/><rect x="15" y="11" width="1" height="1" fill="#fff"/><rect x="16" y="11" width="1" height="1" fill="#000"/><rect x="1" y="12" width="1" height="1" fill="#000"/><rect x="2" y="12" width="4" height="1" fill="#f00"/><rect x="6" y="12" width="9" height="1" fill="#000"/><rect x="15" y="12" width="1" height="1" fill="#fff"/><rect x="16" y="12" width="1" height="1" fill="#000"/><rect x="2" y="13" width="3" height="1" fill="#000"/><rect x="6" y="13" width="4" height="1" fill="#0ff"/><rect x="10" y="13" width="5" height="1" fill="#000"/><rect x="15" y="13" width="1" height="1" fill="#fff"/><rect x="16" y="13" width="1" height="1" fill="#000"/><rect x="7" y="14" width="4" height="1" fill="#000"/><rect x="12" y="14" width="4" height="1" fill="#ff0"/><rect x="16" y="14" width="1" height="1" fill="#000"/><rect x="12" y="15" width="4" height="1" fill="#000"/></svg><svg class="a" style="left:613px;top:438px" width="12" height="12" shape-rendering="crispEdges"><rect x="3" y="0" width="6" height="1" fill="#808080"/><rect x="2" y="1" width="1" height="1" fill="#808080"/><rect x="9" y="1" width="1" height="1" fill="#808080"/><rect x="1" y="2" width="1" height="1" fill="#808080"/><rect x="10" y="2" width="1" height="1" fill="#808080"/><rect x="0" y="3" width="1" height="1" fill="#808080"/><rect x="3" y="3" width="6" height="1" fill="#808080"/><rect x="11" y="3" width="1" height="1" fill="#808080"/><rect x="0" y="4" width="1" height="1" fill="#808080"/><rect x="3" y="4" width="6" height="1" fill="#808080"/><rect x="11" y="4" width="1" height="1" fill="#808080"/><rect x="0" y="5" width="1" height="1" fill="#808080"/><rect x="5" y="5" width="2" height="1" fill="#808080"/><rect x="7" y="5" width="1" height="1" fill="#fff"/><rect x="11" y="5" width="1" height="1" fill="#808080"/><rect x="0" y="6" width="1" height="1" fill="#808080"/><rect x="5" y="6" width="2" height="1" fill="#808080"/><rect x="7" y="6" width="1" height="1" fill="#fff"/><rect x="11" y="6" width="1" height="1" fill="#808080"/><rect x="0" y="7" width="1" height="1" fill="#808080"/><rect x="5" y="7" width="2" height="1" fill="#808080"/><rect x="7" y="7" width="1" height="1" fill="#fff"/><rect x="11" y="7" width="1" height="1" fill="#808080"/><rect x="0" y="8" width="1" height="1" fill="#808080"/><rect x="5" y="8" width="2" height="1" fill="#808080"/><rect x="7" y="8" width="1" height="1" fill="#fff"/><rect x="11" y="8" width="1" height="1" fill="#808080"/><rect x="1" y="9" width="1" height="1" fill="#808080"/><rect x="10" y="9" width="1" height="1" fill="#808080"/><rect x="2" y="10" width="1" height="1" fill="#808080"/><rect x="9" y="10" width="1" height="1" fill="#808080"/><rect x="3" y="11" width="6" height="1" fill="#808080"/></svg>

<!-- original plan text box -->
<div class="a" style="left:250px;top:462px;width:220px;height:85px;background:#d4d0c8;box-shadow:inset -1px -1px #fff,inset 1px 1px #808080,inset -2px -2px #d4d0c8,inset 2px 2px #404040"></div>
<div class="t" style="left:265px;top:513px">STEP 1</div>
<div class="a dith" style="left:452px;top:464px;width:16px;height:66px"></div>
<div class="a raised2" style="left:452px;top:479px;width:16px;height:9px"></div>
<div class="a raised2" style="left:452px;top:514px;width:16px;height:16px"></div>
<div class="arr" style="left:456px;top:520px;border-top-color:#000;border-bottom-width:0"></div>
<div class="a dith" style="left:252px;top:530px;width:200px;height:16px"></div>
<div class="a raised2" style="left:252px;top:530px;width:16px;height:16px"></div>
<div class="arr" style="left:256px;top:534px;border-right-color:#000;border-left-width:0"></div>
<div class="a raised2" style="left:268px;top:530px;width:108px;height:16px"></div>
<div class="a raised2" style="left:436px;top:530px;width:16px;height:16px"></div>
<div class="arr" style="left:442px;top:534px;border-left-color:#000;border-right-width:0"></div>
<div class="a" style="left:452px;top:530px;width:16px;height:16px;background:#d4d0c8"></div>
<!-- tooltip -->
<div class="a" style="left:250px;top:463px;width:227px;height:17px;background:#ffffe1;border:1px solid #000"></div>
<div class="t" style="left:253px;top:465px;letter-spacing:-0.15px">QUERY PLAN FOR STATEMENT 1 (at line 2).</div>
<!-- scenario text box -->
<div class="a" style="left:484px;top:462px;width:371px;height:86px;background:#d4d0c8;box-shadow:inset -1px -1px #fff,inset 1px 1px #808080,inset -2px -2px #d4d0c8,inset 2px 2px #404040"></div>
<div class="t" style="left:487px;top:465px;letter-spacing:-0.15px">QUERY PLAN FOR STATEMENT 1 (at line 2).</div>
<div class="t" style="left:499px;top:513px">STEP 1</div>
<div class="t" style="left:512px;top:529px">The type of query is DECLARE.</div>
<div class="a dith" style="left:837px;top:464px;width:16px;height:82px"></div>
<div class="a raised2" style="left:837px;top:464px;width:16px;height:16px"></div>
<div class="arr" style="left:841px;top:469px;border-bottom-color:#000;border-top-width:0"></div>
<div class="a raised2" style="left:837px;top:480px;width:16px;height:9px"></div>
<div class="a raised2" style="left:837px;top:530px;width:16px;height:16px"></div>
<div class="arr" style="left:841px;top:536px;border-top-color:#000;border-bottom-width:0"></div>

<!-- SQL Text / SQL Information tabs -->
<div class="a" style="left:241px;top:553px;width:57px;height:20px;background:#d4d0c8;box-shadow:inset 0 1px #404040,inset 1px 0 #fff,inset -1px -1px #404040,inset -2px -2px #808080"></div>
<div class="t" style="left:249px;top:557px">SQL Text</div>
<div class="a" style="left:298px;top:552px;width:91px;height:23px;background:#d4d0c8;box-shadow:inset 1px 0 #fff,inset -1px -1px #404040,inset -2px -2px #808080"></div>
<div class="t" style="left:305px;top:559px">SQL Information</div>

<!-- status bar -->
<div class="a" style="left:3px;top:584px;width:200px;height:18px;box-shadow:inset -1px -1px #fff,inset 1px 1px #808080"></div>
<div class="a" style="left:205px;top:584px;width:48px;height:18px;box-shadow:inset -1px -1px #fff,inset 1px 1px #808080"></div>
<div class="t" style="left:205px;top:587px;width:48px;text-align:center;color:#808080;text-shadow:1px 1px #fff">Num</div>
<div class="a" style="left:255px;top:584px;width:48px;height:18px;box-shadow:inset -1px -1px #fff,inset 1px 1px #808080"></div>
<div class="t" style="left:255px;top:587px;width:48px;text-align:center;color:#000">Insert</div>
<div class="a" style="left:305px;top:584px;width:48px;height:18px;box-shadow:inset -1px -1px #fff,inset 1px 1px #808080"></div>
<div class="t" style="left:305px;top:587px;width:48px;text-align:center;color:#808080;text-shadow:1px 1px #fff">Caps</div>
<div class="a" style="left:355px;top:584px;width:48px;height:18px;box-shadow:inset -1px -1px #fff,inset 1px 1px #808080"></div>
<div class="t" style="left:355px;top:587px;width:48px;text-align:center;color:#808080;text-shadow:1px 1px #fff">Scroll</div>
<div class="a" style="left:405px;top:584px;width:48px;height:18px;box-shadow:inset -1px -1px #fff,inset 1px 1px #808080"></div>
<div class="t" style="left:405px;top:587px;width:48px;text-align:center;color:#000">Modified</div>
<div class="a" style="left:455px;top:584px;width:64px;height:18px;box-shadow:inset -1px -1px #fff,inset 1px 1px #808080"></div>
<div class="a" style="left:521px;top:584px;width:350px;height:18px;box-shadow:inset -1px -1px #fff,inset 1px 1px #808080"></div>
</body></html>
